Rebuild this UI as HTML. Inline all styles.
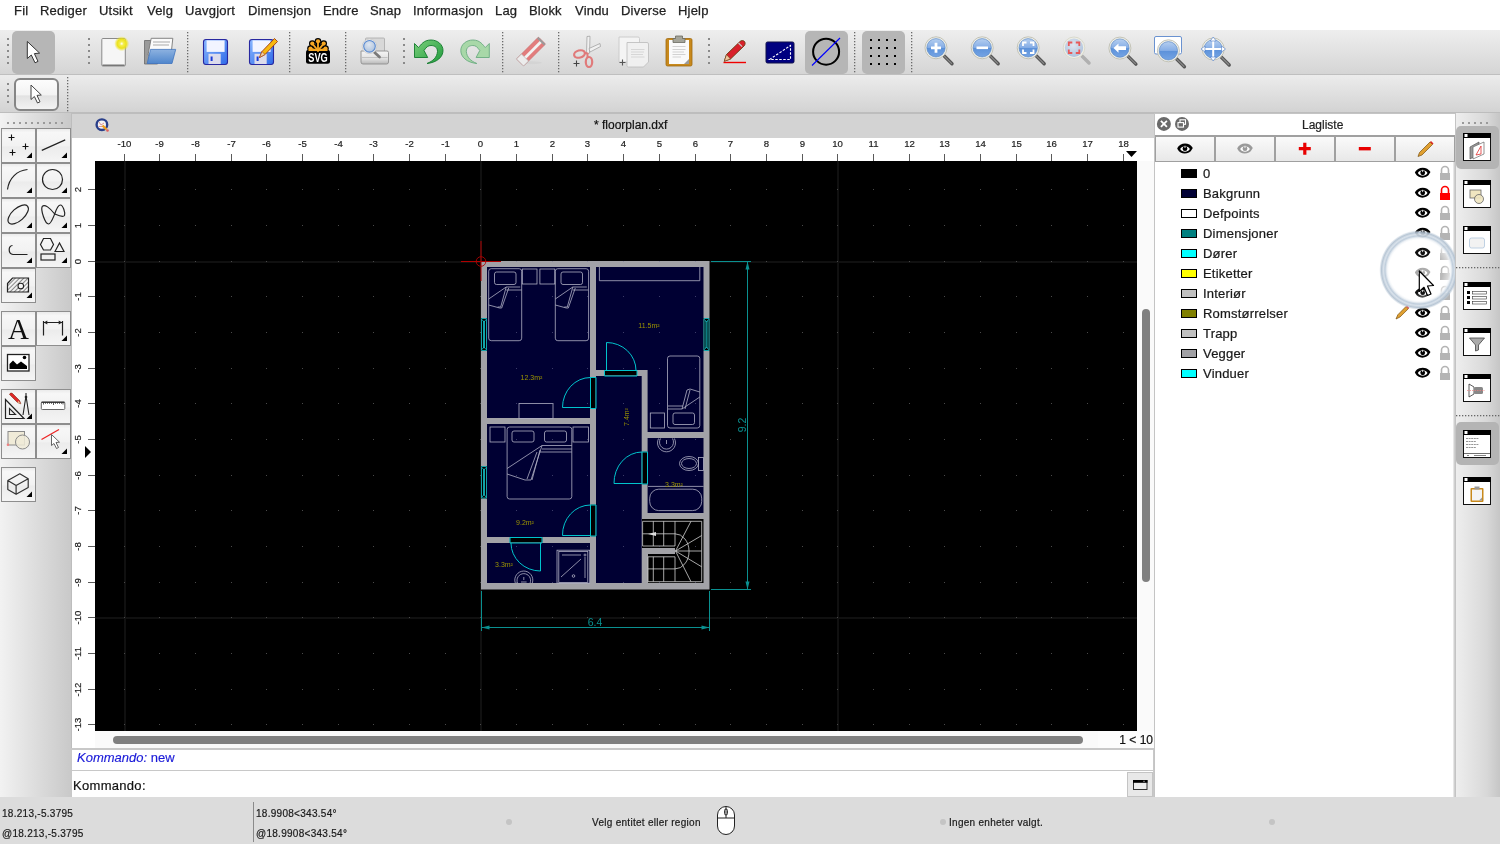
<!DOCTYPE html>
<html><head><meta charset="utf-8">
<style>
*{margin:0;padding:0;box-sizing:border-box}
html,body{width:1500px;height:844px;overflow:hidden;-webkit-font-smoothing:antialiased;background:#fff;font-family:"Liberation Sans",sans-serif;color:#222;position:relative}
.a{position:absolute;will-change:transform}
#menu{left:0;top:0;width:1500px;height:30px;background:#fff}
#menu span{position:absolute;top:3px;font-size:13px;color:#222;line-height:16px;letter-spacing:0.2px;white-space:nowrap;-webkit-text-stroke:0.25px #222}
.tb{left:0;width:1500px;background:linear-gradient(#ececec,#d6d6d6);border-bottom:1px solid #c2c2c2}
#tb1{top:30px;height:45px}
#tb2{top:75px;height:38px}
#left{left:0;top:113px;width:71px;height:685px;background:linear-gradient(90deg,#ededed,#cfcfcf);border-right:1px solid #b9b9b9}
#mdi{left:71px;top:113px;width:1084px;height:636px;background:#c9c9c9}
#mtitle{left:72px;top:114px;width:1082px;height:24px;background:#d4d4d4}
#mtitle .t{position:absolute;left:0;width:1082px;top:5px;text-align:center;font-size:12px;color:#222}
#rulerT{left:72px;top:138px;width:1065px;height:23px;background:#fff}
#rulerL{left:72px;top:161px;width:23px;height:570px;background:#fff}
#canvas{left:95px;top:161px;width:1042px;height:570px;background:#000;overflow:hidden}
#vscroll{left:1137px;top:138px;width:17px;height:593px;background:#fafafa}
#hscroll{left:72px;top:731px;width:1082px;height:17px;background:#fafafa}
#cmd{left:72px;top:749px;width:1082px;height:48px;background:#fff}
#dock{left:1155px;top:113px;width:300px;height:685px;background:#fff;border-left:1px solid #c8c8c8}
#rtb{left:1455px;top:113px;width:45px;height:685px;background:linear-gradient(90deg,#ededed,#cdcdcd)}
#status{left:0;top:797px;width:1500px;height:47px;background:#dcdcdc}
.st{position:absolute;font-size:10px;color:#1a1a1a;line-height:12px;letter-spacing:0.28px;white-space:nowrap;-webkit-text-stroke:0.2px #1a1a1a}
.rt{position:absolute;font-size:10px;color:#333;line-height:12px}
.rl{position:absolute;font-size:10px;color:#333;line-height:12px;transform:rotate(-90deg);transform-origin:center}
</style></head><body>
<div id="menu" class="a">
<span style="left:14px">Fil</span>
<span style="left:40px">Rediger</span>
<span style="left:99px">Utsikt</span>
<span style="left:147px">Velg</span>
<span style="left:185px">Uavgjort</span>
<span style="left:248px">Dimensjon</span>
<span style="left:323px">Endre</span>
<span style="left:370px">Snap</span>
<span style="left:413px">Informasjon</span>
<span style="left:495px">Lag</span>
<span style="left:529px">Blokk</span>
<span style="left:575px">Vindu</span>
<span style="left:621px">Diverse</span>
<span style="left:678px">Hjelp</span>
</div>
<div class="a" style="left:0;top:30px;width:1500px;height:45px;background:linear-gradient(#eeeeee,#d5d5d5);border-bottom:1px solid #bfbfbf"></div>
<div class="a" style="left:0;top:75px;width:1500px;height:38px;background:linear-gradient(#ececec,#d3d3d3);border-bottom:1px solid #bdbdbd"></div>
<svg class="a" style="left:0;top:30px" width="1500" height="83" viewBox="0 30 1500 83">
<defs>
<linearGradient id="mg" x1="0" y1="0" x2="0" y2="1"><stop offset="0" stop-color="#b6cff0"/><stop offset="0.48" stop-color="#86aee6"/><stop offset="0.53" stop-color="#5d92da"/><stop offset="1" stop-color="#74a4e4"/></linearGradient>
<radialGradient id="mgr" cx="0.45" cy="0.35" r="0.7"><stop offset="0" stop-color="#dfe6f0"/><stop offset="1" stop-color="#aac0dc"/></radialGradient>
<linearGradient id="flop" x1="0" y1="0" x2="1" y2="1"><stop offset="0" stop-color="#8ab8ff"/><stop offset="1" stop-color="#2f6ae8"/></linearGradient>
<linearGradient id="fold" x1="0" y1="0" x2="0" y2="1"><stop offset="0" stop-color="#8db2e0"/><stop offset="1" stop-color="#4f86cc"/></linearGradient>
<radialGradient id="star"><stop offset="0" stop-color="#ffffff"/><stop offset="0.25" stop-color="#f4ee50"/><stop offset="0.6" stop-color="#ece21a"/><stop offset="1" stop-color="#ece21a" stop-opacity="0"/></radialGradient>
<linearGradient id="und" x1="0" y1="0" x2="1" y2="1"><stop offset="0" stop-color="#7cd07c"/><stop offset="1" stop-color="#1f9a3c"/></linearGradient>
</defs>
<rect x="7" y="38" width="2" height="2" fill="#8a8a8a"/><rect x="7" y="44" width="2" height="2" fill="#8a8a8a"/><rect x="7" y="50" width="2" height="2" fill="#8a8a8a"/><rect x="7" y="56" width="2" height="2" fill="#8a8a8a"/><rect x="7" y="62" width="2" height="2" fill="#8a8a8a"/>
<rect x="88" y="38" width="2" height="2" fill="#8a8a8a"/><rect x="88" y="44" width="2" height="2" fill="#8a8a8a"/><rect x="88" y="50" width="2" height="2" fill="#8a8a8a"/><rect x="88" y="56" width="2" height="2" fill="#8a8a8a"/><rect x="88" y="62" width="2" height="2" fill="#8a8a8a"/>
<rect x="403" y="38" width="2" height="2" fill="#8a8a8a"/><rect x="403" y="44" width="2" height="2" fill="#8a8a8a"/><rect x="403" y="50" width="2" height="2" fill="#8a8a8a"/><rect x="403" y="56" width="2" height="2" fill="#8a8a8a"/><rect x="403" y="62" width="2" height="2" fill="#8a8a8a"/>
<rect x="708" y="38" width="2" height="2" fill="#8a8a8a"/><rect x="708" y="44" width="2" height="2" fill="#8a8a8a"/><rect x="708" y="50" width="2" height="2" fill="#8a8a8a"/><rect x="708" y="56" width="2" height="2" fill="#8a8a8a"/><rect x="708" y="62" width="2" height="2" fill="#8a8a8a"/>
<rect x="7" y="83" width="2" height="2" fill="#8a8a8a"/><rect x="7" y="89" width="2" height="2" fill="#8a8a8a"/><rect x="7" y="95" width="2" height="2" fill="#8a8a8a"/><rect x="7" y="101" width="2" height="2" fill="#8a8a8a"/>
<rect x="187.0" y="32" width="1.3" height="1.3" fill="#6a6a6a"/><rect x="187.0" y="35" width="1.3" height="1.3" fill="#6a6a6a"/><rect x="187.0" y="38" width="1.3" height="1.3" fill="#6a6a6a"/><rect x="187.0" y="41" width="1.3" height="1.3" fill="#6a6a6a"/><rect x="187.0" y="44" width="1.3" height="1.3" fill="#6a6a6a"/><rect x="187.0" y="47" width="1.3" height="1.3" fill="#6a6a6a"/><rect x="187.0" y="50" width="1.3" height="1.3" fill="#6a6a6a"/><rect x="187.0" y="53" width="1.3" height="1.3" fill="#6a6a6a"/><rect x="187.0" y="56" width="1.3" height="1.3" fill="#6a6a6a"/><rect x="187.0" y="59" width="1.3" height="1.3" fill="#6a6a6a"/><rect x="187.0" y="62" width="1.3" height="1.3" fill="#6a6a6a"/><rect x="187.0" y="65" width="1.3" height="1.3" fill="#6a6a6a"/><rect x="187.0" y="68" width="1.3" height="1.3" fill="#6a6a6a"/><rect x="187.0" y="71" width="1.3" height="1.3" fill="#6a6a6a"/>
<rect x="289.0" y="32" width="1.3" height="1.3" fill="#6a6a6a"/><rect x="289.0" y="35" width="1.3" height="1.3" fill="#6a6a6a"/><rect x="289.0" y="38" width="1.3" height="1.3" fill="#6a6a6a"/><rect x="289.0" y="41" width="1.3" height="1.3" fill="#6a6a6a"/><rect x="289.0" y="44" width="1.3" height="1.3" fill="#6a6a6a"/><rect x="289.0" y="47" width="1.3" height="1.3" fill="#6a6a6a"/><rect x="289.0" y="50" width="1.3" height="1.3" fill="#6a6a6a"/><rect x="289.0" y="53" width="1.3" height="1.3" fill="#6a6a6a"/><rect x="289.0" y="56" width="1.3" height="1.3" fill="#6a6a6a"/><rect x="289.0" y="59" width="1.3" height="1.3" fill="#6a6a6a"/><rect x="289.0" y="62" width="1.3" height="1.3" fill="#6a6a6a"/><rect x="289.0" y="65" width="1.3" height="1.3" fill="#6a6a6a"/><rect x="289.0" y="68" width="1.3" height="1.3" fill="#6a6a6a"/><rect x="289.0" y="71" width="1.3" height="1.3" fill="#6a6a6a"/>
<rect x="345.0" y="32" width="1.3" height="1.3" fill="#6a6a6a"/><rect x="345.0" y="35" width="1.3" height="1.3" fill="#6a6a6a"/><rect x="345.0" y="38" width="1.3" height="1.3" fill="#6a6a6a"/><rect x="345.0" y="41" width="1.3" height="1.3" fill="#6a6a6a"/><rect x="345.0" y="44" width="1.3" height="1.3" fill="#6a6a6a"/><rect x="345.0" y="47" width="1.3" height="1.3" fill="#6a6a6a"/><rect x="345.0" y="50" width="1.3" height="1.3" fill="#6a6a6a"/><rect x="345.0" y="53" width="1.3" height="1.3" fill="#6a6a6a"/><rect x="345.0" y="56" width="1.3" height="1.3" fill="#6a6a6a"/><rect x="345.0" y="59" width="1.3" height="1.3" fill="#6a6a6a"/><rect x="345.0" y="62" width="1.3" height="1.3" fill="#6a6a6a"/><rect x="345.0" y="65" width="1.3" height="1.3" fill="#6a6a6a"/><rect x="345.0" y="68" width="1.3" height="1.3" fill="#6a6a6a"/><rect x="345.0" y="71" width="1.3" height="1.3" fill="#6a6a6a"/>
<rect x="502.0" y="32" width="1.3" height="1.3" fill="#6a6a6a"/><rect x="502.0" y="35" width="1.3" height="1.3" fill="#6a6a6a"/><rect x="502.0" y="38" width="1.3" height="1.3" fill="#6a6a6a"/><rect x="502.0" y="41" width="1.3" height="1.3" fill="#6a6a6a"/><rect x="502.0" y="44" width="1.3" height="1.3" fill="#6a6a6a"/><rect x="502.0" y="47" width="1.3" height="1.3" fill="#6a6a6a"/><rect x="502.0" y="50" width="1.3" height="1.3" fill="#6a6a6a"/><rect x="502.0" y="53" width="1.3" height="1.3" fill="#6a6a6a"/><rect x="502.0" y="56" width="1.3" height="1.3" fill="#6a6a6a"/><rect x="502.0" y="59" width="1.3" height="1.3" fill="#6a6a6a"/><rect x="502.0" y="62" width="1.3" height="1.3" fill="#6a6a6a"/><rect x="502.0" y="65" width="1.3" height="1.3" fill="#6a6a6a"/><rect x="502.0" y="68" width="1.3" height="1.3" fill="#6a6a6a"/><rect x="502.0" y="71" width="1.3" height="1.3" fill="#6a6a6a"/>
<rect x="558.0" y="32" width="1.3" height="1.3" fill="#6a6a6a"/><rect x="558.0" y="35" width="1.3" height="1.3" fill="#6a6a6a"/><rect x="558.0" y="38" width="1.3" height="1.3" fill="#6a6a6a"/><rect x="558.0" y="41" width="1.3" height="1.3" fill="#6a6a6a"/><rect x="558.0" y="44" width="1.3" height="1.3" fill="#6a6a6a"/><rect x="558.0" y="47" width="1.3" height="1.3" fill="#6a6a6a"/><rect x="558.0" y="50" width="1.3" height="1.3" fill="#6a6a6a"/><rect x="558.0" y="53" width="1.3" height="1.3" fill="#6a6a6a"/><rect x="558.0" y="56" width="1.3" height="1.3" fill="#6a6a6a"/><rect x="558.0" y="59" width="1.3" height="1.3" fill="#6a6a6a"/><rect x="558.0" y="62" width="1.3" height="1.3" fill="#6a6a6a"/><rect x="558.0" y="65" width="1.3" height="1.3" fill="#6a6a6a"/><rect x="558.0" y="68" width="1.3" height="1.3" fill="#6a6a6a"/><rect x="558.0" y="71" width="1.3" height="1.3" fill="#6a6a6a"/>
<rect x="854.0" y="32" width="1.3" height="1.3" fill="#6a6a6a"/><rect x="854.0" y="35" width="1.3" height="1.3" fill="#6a6a6a"/><rect x="854.0" y="38" width="1.3" height="1.3" fill="#6a6a6a"/><rect x="854.0" y="41" width="1.3" height="1.3" fill="#6a6a6a"/><rect x="854.0" y="44" width="1.3" height="1.3" fill="#6a6a6a"/><rect x="854.0" y="47" width="1.3" height="1.3" fill="#6a6a6a"/><rect x="854.0" y="50" width="1.3" height="1.3" fill="#6a6a6a"/><rect x="854.0" y="53" width="1.3" height="1.3" fill="#6a6a6a"/><rect x="854.0" y="56" width="1.3" height="1.3" fill="#6a6a6a"/><rect x="854.0" y="59" width="1.3" height="1.3" fill="#6a6a6a"/><rect x="854.0" y="62" width="1.3" height="1.3" fill="#6a6a6a"/><rect x="854.0" y="65" width="1.3" height="1.3" fill="#6a6a6a"/><rect x="854.0" y="68" width="1.3" height="1.3" fill="#6a6a6a"/><rect x="854.0" y="71" width="1.3" height="1.3" fill="#6a6a6a"/>
<rect x="911.0" y="32" width="1.3" height="1.3" fill="#6a6a6a"/><rect x="911.0" y="35" width="1.3" height="1.3" fill="#6a6a6a"/><rect x="911.0" y="38" width="1.3" height="1.3" fill="#6a6a6a"/><rect x="911.0" y="41" width="1.3" height="1.3" fill="#6a6a6a"/><rect x="911.0" y="44" width="1.3" height="1.3" fill="#6a6a6a"/><rect x="911.0" y="47" width="1.3" height="1.3" fill="#6a6a6a"/><rect x="911.0" y="50" width="1.3" height="1.3" fill="#6a6a6a"/><rect x="911.0" y="53" width="1.3" height="1.3" fill="#6a6a6a"/><rect x="911.0" y="56" width="1.3" height="1.3" fill="#6a6a6a"/><rect x="911.0" y="59" width="1.3" height="1.3" fill="#6a6a6a"/><rect x="911.0" y="62" width="1.3" height="1.3" fill="#6a6a6a"/><rect x="911.0" y="65" width="1.3" height="1.3" fill="#6a6a6a"/><rect x="911.0" y="68" width="1.3" height="1.3" fill="#6a6a6a"/><rect x="911.0" y="71" width="1.3" height="1.3" fill="#6a6a6a"/>
<rect x="67.0" y="77" width="1.3" height="1.3" fill="#6a6a6a"/><rect x="67.0" y="80" width="1.3" height="1.3" fill="#6a6a6a"/><rect x="67.0" y="83" width="1.3" height="1.3" fill="#6a6a6a"/><rect x="67.0" y="86" width="1.3" height="1.3" fill="#6a6a6a"/><rect x="67.0" y="89" width="1.3" height="1.3" fill="#6a6a6a"/><rect x="67.0" y="92" width="1.3" height="1.3" fill="#6a6a6a"/><rect x="67.0" y="95" width="1.3" height="1.3" fill="#6a6a6a"/><rect x="67.0" y="98" width="1.3" height="1.3" fill="#6a6a6a"/><rect x="67.0" y="101" width="1.3" height="1.3" fill="#6a6a6a"/><rect x="67.0" y="104" width="1.3" height="1.3" fill="#6a6a6a"/><rect x="67.0" y="107" width="1.3" height="1.3" fill="#6a6a6a"/><rect x="67.0" y="110" width="1.3" height="1.3" fill="#6a6a6a"/>
<rect x="12" y="31" width="43" height="43" rx="5" fill="#b6b6b6"/>
<rect x="805" y="31" width="43" height="43" rx="5" fill="#b6b6b6"/>
<rect x="862" y="31" width="43" height="43" rx="5" fill="#b6b6b6"/>
<path d="M27.3 41.5V58.5L31.3 55L35 62.8L38 61.4L34.4 53.6L39.6 53.1Z" fill="#fff" stroke="#333" stroke-width="1" stroke-linejoin="round"/>
<defs><linearGradient id="b2" x1="0" y1="0" x2="0" y2="1"><stop offset="0" stop-color="#fdfdfd"/><stop offset="0.5" stop-color="#f3f3f3"/><stop offset="0.55" stop-color="#e2e2e2"/><stop offset="1" stop-color="#f4f4f4"/></linearGradient></defs>
<rect x="15" y="79" width="43" height="31" rx="5" fill="url(#b2)" stroke="#858585" stroke-width="2"/>
<path d="M31 85V99.5L34.4 96.5L37.5 103L40 101.8L37 95.4L41.3 95Z" fill="#fff" stroke="#444" stroke-width="1" stroke-linejoin="round"/>
<rect x="101.8" y="38.5" width="23.5" height="27.5" rx="1" fill="#f6f6f6" stroke="#8a8a8a" stroke-width="1"/>
<rect x="102.5" y="64.5" width="22" height="1.5" fill="#777"/>
<circle cx="121.7" cy="43.7" r="7.5" fill="url(#star)"/>
<path d="M144.5 40.5h8l1 1.5h4v22h-13z" fill="#9a9a9a" stroke="#6a6a6a" stroke-width="0.8"/>
<path d="M151.2 38.3H172.8L171 55H148z" fill="#fbfbfb" stroke="#777" stroke-width="0.9"/>
<path d="M153 42h17M153 45h16" stroke="#aaa" stroke-width="1.2"/>
<path d="M150.5 49.4H175.7L172 63.5H147.2Z" fill="url(#fold)" stroke="#3f74bf" stroke-width="0.8"/>
<rect x="203.5" y="39.5" width="24" height="25" rx="2.5" fill="url(#flop)" stroke="#2828a0" stroke-width="1.1"/><rect x="206.6" y="40.4" width="18" height="11.5" fill="#f2f4ff"/><rect x="208.5" y="53.8" width="12.2" height="10.2" fill="#dcdcec"/><rect x="210.6" y="56.5" width="2" height="4.5" fill="#1a3ad8"/>
<rect x="249.5" y="39.5" width="24" height="25" rx="2.5" fill="url(#flop)" stroke="#2828a0" stroke-width="1.1"/><rect x="252.6" y="40.4" width="18" height="11.5" fill="#f2f4ff"/><rect x="254.5" y="53.8" width="12.2" height="10.2" fill="#dcdcec"/><rect x="256.6" y="56.5" width="2" height="4.5" fill="#1a3ad8"/>
<path d="M259.5 57.5L262 51.5L274.5 38.5L277.5 41.5L265 54.5Z" fill="#f7b80f" stroke="#a03a10" stroke-width="0.9"/>
<path d="M259.5 57.5L262 51.5L265 54.5Z" fill="#f0d0a0" stroke="#a03a10" stroke-width="0.6"/>
<path d="M318 50.5L310.5 48.5" stroke="#000" stroke-width="4.2" stroke-linecap="round"/><circle cx="310.5" cy="48.5" r="3.3" fill="#000"/><path d="M318 50.5L312.3 43.6" stroke="#000" stroke-width="4.2" stroke-linecap="round"/><circle cx="312.3" cy="43.6" r="3.3" fill="#000"/><path d="M318 50.5L318 41.3" stroke="#000" stroke-width="4.2" stroke-linecap="round"/><circle cx="318" cy="41.3" r="3.3" fill="#000"/><path d="M318 50.5L323.7 43.6" stroke="#000" stroke-width="4.2" stroke-linecap="round"/><circle cx="323.7" cy="43.6" r="3.3" fill="#000"/><path d="M318 50.5L325.5 48.5" stroke="#000" stroke-width="4.2" stroke-linecap="round"/><circle cx="325.5" cy="48.5" r="3.3" fill="#000"/>
<rect x="306" y="49.7" width="24" height="14" rx="2.5" fill="#000"/>
<path d="M318 50.5L310.5 48.5" stroke="#f7a823" stroke-width="1.8" stroke-linecap="round"/><circle cx="310.5" cy="48.5" r="2.1" fill="#f7a823"/><path d="M318 50.5L312.3 43.6" stroke="#f7a823" stroke-width="1.8" stroke-linecap="round"/><circle cx="312.3" cy="43.6" r="2.1" fill="#f7a823"/><path d="M318 50.5L318 41.3" stroke="#f7a823" stroke-width="1.8" stroke-linecap="round"/><circle cx="318" cy="41.3" r="2.1" fill="#f7a823"/><path d="M318 50.5L323.7 43.6" stroke="#f7a823" stroke-width="1.8" stroke-linecap="round"/><circle cx="323.7" cy="43.6" r="2.1" fill="#f7a823"/><path d="M318 50.5L325.5 48.5" stroke="#f7a823" stroke-width="1.8" stroke-linecap="round"/><circle cx="325.5" cy="48.5" r="2.1" fill="#f7a823"/>
<rect x="308.5" y="49.2" width="19" height="1.8" fill="#f7a823"/>
<text x="0" y="0" font-size="12.5" font-weight="bold" fill="#fff" text-anchor="middle" font-family="Liberation Sans" transform="translate(318 61.8) scale(0.74 0.98)">SVG</text>
<defs><linearGradient id="prn" x1="0" y1="0" x2="0" y2="1"><stop offset="0" stop-color="#f6f6f6"/><stop offset="0.6" stop-color="#e0e0e0"/><stop offset="1" stop-color="#b8b8b8"/></linearGradient></defs>
<rect x="365.5" y="38" width="19" height="14" rx="1" fill="#d8d8d8" stroke="#a8a8a8" stroke-width="0.8"/>
<path d="M361 51h26a1.5 1.5 0 0 1 1.5 1.5v9.5a2 2 0 0 1 -2 2h-23.5a2 2 0 0 1 -2 -2z" fill="url(#prn)" stroke="#8e8e8e" stroke-width="0.9"/>
<path d="M362 57.5h25.5" stroke="#bdbdbd" stroke-width="0.9"/>
<path d="M373 51l6.5 6" stroke="#7a7a7a" stroke-width="2.8" stroke-linecap="round"/>
<circle cx="369.5" cy="46.3" r="7.3" fill="#f2f2f2" stroke="#c8c8c8" stroke-width="0.8"/>
<circle cx="369.5" cy="46.3" r="5.8" fill="url(#mgr)" stroke="#5a8ad0" stroke-width="1.1"/>
<path d="M414.5 43.5L418.5 47.5C421 45 423.5 40 431 40C437.5 40 443 44.5 443 50.5C443 57 437 62.5 427 63.5C433 61 437 57.5 437.5 51.5C437.5 47 434 45.5 431 45.5C428 45.5 426.5 47 424 50.5L427.7 57.5H414.5Z" fill="url(#und)" stroke="#137a2d" stroke-width="0.9" stroke-linejoin="round"/>
<path d="M489.3 43.5L485.3 47.5C482.8 45 480.3 40 472.8 40C466.3 40 460.8 44.5 460.8 50.5C460.8 57 466.8 62.5 476.8 63.5C470.8 61 466.8 57.5 466.3 51.5C466.3 47 469.8 45.5 472.8 45.5C475.8 45.5 477.3 47 479.8 50.5L476.1 57.5H489.3Z" fill="#a8d8a8" stroke="#6aaa80" stroke-width="0.9" stroke-linejoin="round"/>
<ellipse cx="531" cy="62.8" rx="11" ry="1.5" fill="#d4d4d4"/>
<g transform="translate(531 51.5) rotate(-45)"><rect x="-15.5" y="-5" width="31" height="10" rx="1" fill="#e27c7c" stroke="#c86a6a" stroke-width="0.6"/><rect x="-10" y="-1.2" width="25" height="2.8" fill="#f2f2f2"/><rect x="-15.5" y="-5" width="7" height="10" fill="#ececec" stroke="#b0b0b0" stroke-width="0.6"/><rect x="13.5" y="-5" width="2" height="10" fill="#9a9a9a"/></g>
<path d="M587 36.5l3 -0.3 -0.5 17 -3 1z" fill="#f0f0f0" stroke="#999" stroke-width="0.7"/>
<path d="M590 52l10.5 -5.5 -0.5 -3 -11 5z" fill="#f0f0f0" stroke="#999" stroke-width="0.7"/>
<ellipse cx="579.5" cy="54" rx="5.5" ry="3.6" fill="none" stroke="#e07a7a" stroke-width="2.2" transform="rotate(-15 579.5 54)"/>
<ellipse cx="589" cy="62" rx="3.2" ry="5" fill="none" stroke="#e07a7a" stroke-width="2.2"/>
<path d="M584 52.5l3.5 1 0 4" stroke="#e07a7a" stroke-width="2" fill="none"/>
<path d="M573.5 63.5h6M576.5 60.5v6" stroke="#444" stroke-width="1.1"/>
<path d="M619 37h19a1.5 1.5 0 0 1 1.5 1.5v23.5h-20.5z" fill="#f4f4f4" stroke="#c8c8c8" stroke-width="0.9"/>
<path d="M627 42.5h20a1.5 1.5 0 0 1 1.5 1.5v18l-5 5h-15a1.5 1.5 0 0 1 -1.5 -1.5z" fill="#f0f0f0" stroke="#c0c0c0" stroke-width="0.9"/>
<path d="M631 49.5h13.5M631 52h13M631 54.5h12M631 57h13.5" stroke="#cfcfcf" stroke-width="0.8"/>
<path d="M619.5 62.5h6M622.5 59.5v6" stroke="#555" stroke-width="1.1"/>
<rect x="666" y="38.5" width="26" height="27.5" rx="1.5" fill="#c8891c" stroke="#a06a10" stroke-width="0.8"/>
<rect x="669" y="40" width="20" height="24" fill="#fafafa"/>
<path d="M672.5 46.5h13M672.5 49.5h13M672.5 52h11.5M672.5 54.5h13M672.5 57h8.5" stroke="#c8c8c8" stroke-width="0.8"/>
<path d="M684 64l5 -5v5z" fill="#9a9a9a"/>
<path d="M675.5 36h7v2.5h2.5v4h-12v-4h2.5z" fill="#a4a49a" stroke="#6a6a60" stroke-width="0.8"/>
<path d="M723.5 62.5h22.5" stroke="#f00000" stroke-width="1.4"/>
<path d="M724.3 61.2L726.5 54.5L740 41.5C741.5 40 743.5 40.5 744.5 41.5C745.3 42.5 745.5 44.5 744 46L730.5 59Z" fill="#d8202a" stroke="#6a3a10" stroke-width="0.9"/>
<path d="M724.3 61.2L726.5 54.5L730.5 59Z" fill="#f0c8a0" stroke="#6a3a10" stroke-width="0.6"/>
<path d="M738.5 43l3.6 3.6" stroke="#c8c8c8" stroke-width="1.3"/>
<rect x="766" y="42" width="28" height="21" rx="1.5" fill="#000080" stroke="#10104a" stroke-width="1"/>
<path d="M769.5 59.5L790.5 45.5V59.5Z" fill="none" stroke="#fff" stroke-width="1.1" stroke-dasharray="2.5 1.5"/>
<circle cx="826.1" cy="51.7" r="13" fill="none" stroke="#000" stroke-width="2"/>
<path d="M812 65.5L840 38" stroke="#0000ff" stroke-width="1.1"/>
<rect x="870" y="39" width="2" height="2" fill="#000"/>
<rect x="870" y="47" width="2" height="2" fill="#000"/>
<rect x="870" y="55" width="2" height="2" fill="#000"/>
<rect x="870" y="63" width="2" height="2" fill="#000"/>
<rect x="878" y="39" width="2" height="2" fill="#000"/>
<rect x="878" y="47" width="2" height="2" fill="#000"/>
<rect x="878" y="55" width="2" height="2" fill="#000"/>
<rect x="878" y="63" width="2" height="2" fill="#000"/>
<rect x="886" y="39" width="2" height="2" fill="#000"/>
<rect x="886" y="47" width="2" height="2" fill="#000"/>
<rect x="886" y="55" width="2" height="2" fill="#000"/>
<rect x="886" y="63" width="2" height="2" fill="#000"/>
<rect x="894" y="39" width="2" height="2" fill="#000"/>
<rect x="894" y="47" width="2" height="2" fill="#000"/>
<rect x="894" y="55" width="2" height="2" fill="#000"/>
<rect x="894" y="63" width="2" height="2" fill="#000"/>
<path d="M944 55.8L952 63.8" stroke="#555" stroke-width="3.4" stroke-linecap="round"/><path d="M944.5 56.3L951.5 63.3" stroke="#8a8a8a" stroke-width="1.2" stroke-linecap="round"/><circle cx="936" cy="47.8" r="11" fill="#f0f0ea" stroke="#bdbdb0" stroke-width="0.9"/><circle cx="936" cy="47.8" r="9.2" fill="url(#mg)" stroke="#4f7fc0" stroke-width="0.6"/><path d="M931 47.8h10M936 42.8v10" stroke="#fff" stroke-width="2.8"/>
<path d="M990.2 55.8L998.2 63.8" stroke="#555" stroke-width="3.4" stroke-linecap="round"/><path d="M990.7 56.3L997.7 63.3" stroke="#8a8a8a" stroke-width="1.2" stroke-linecap="round"/><circle cx="982.2" cy="47.8" r="11" fill="#f0f0ea" stroke="#bdbdb0" stroke-width="0.9"/><circle cx="982.2" cy="47.8" r="9.2" fill="url(#mg)" stroke="#4f7fc0" stroke-width="0.6"/><path d="M976.5 47.8h11.5" stroke="#fff" stroke-width="2.6"/>
<path d="M1036.2 55.8L1044.2 63.8" stroke="#555" stroke-width="3.4" stroke-linecap="round"/><path d="M1036.7 56.3L1043.7 63.3" stroke="#8a8a8a" stroke-width="1.2" stroke-linecap="round"/><circle cx="1028.2" cy="47.8" r="11" fill="#f0f0ea" stroke="#bdbdb0" stroke-width="0.9"/><circle cx="1028.2" cy="47.8" r="9.2" fill="url(#mg)" stroke="#4f7fc0" stroke-width="0.6"/><path d="M1023 46v-3.5h3.5M1030 42.5h3.5v3.5M1033.5 49.5v3.5h-3.5M1026.5 53h-3.5v-3.5" stroke="#fff" stroke-width="1.8" fill="none"/>
<path d="M1081.5 55.5L1089 63" stroke="#b0b0b0" stroke-width="3.5" stroke-linecap="round"/><circle cx="1074" cy="47.8" r="10.8" fill="#eeeee6" stroke="#d8d8cc" stroke-width="1"/><circle cx="1074" cy="47.8" r="9.2" fill="url(#mgr)"/>
<path d="M1068.8 46v-3.5h3.5M1075.8 42.5h3.5v3.5M1079.3 49.5v3.5h-3.5M1072.3 53h-3.5v-3.5" stroke="#e85a5a" stroke-width="1.8" fill="none"/>
<path d="M1127.9 56.1L1135.9 64.1" stroke="#555" stroke-width="3.4" stroke-linecap="round"/><path d="M1128.4 56.6L1135.4 63.6" stroke="#8a8a8a" stroke-width="1.2" stroke-linecap="round"/><circle cx="1119.9" cy="48.1" r="11" fill="#f0f0ea" stroke="#bdbdb0" stroke-width="0.9"/><circle cx="1119.9" cy="48.1" r="9.2" fill="url(#mg)" stroke="#4f7fc0" stroke-width="0.6"/><path d="M1113.5 48.1L1118.5 43.5V46.3H1126V50H1118.5V52.8Z" fill="#fff"/>
<rect x="1154.5" y="36.5" width="27" height="17.5" rx="1.5" fill="#fff" stroke="#6a92d0" stroke-width="1"/>
<path d="M1176.4 58.8L1184.4 66.8" stroke="#555" stroke-width="3.4" stroke-linecap="round"/><path d="M1176.9 59.3L1183.9 66.3" stroke="#8a8a8a" stroke-width="1.2" stroke-linecap="round"/><circle cx="1168.4" cy="50.8" r="11" fill="#f0f0ea" stroke="#bdbdb0" stroke-width="0.9"/><circle cx="1168.4" cy="50.8" r="9.2" fill="url(#mg)" stroke="#4f7fc0" stroke-width="0.6"/>
<path d="M1221.2 57L1229.2 65" stroke="#555" stroke-width="3.4" stroke-linecap="round"/><path d="M1221.7 57.5L1228.7 64.5" stroke="#8a8a8a" stroke-width="1.2" stroke-linecap="round"/><circle cx="1213.2" cy="49" r="11" fill="#f0f0ea" stroke="#bdbdb0" stroke-width="0.9"/><circle cx="1213.2" cy="49" r="9.2" fill="url(#mg)" stroke="#4f7fc0" stroke-width="0.6"/><path d="M1213.2 38.5V59.5M1202.7 49H1223.7" stroke="#fff" stroke-width="2"/><path d="M1213.2 37l-3 4h6zM1213.2 61l-3 -4h6zM1201 49l4 -3v6zM1225.5 49l-4 -3v6z" fill="#fff" stroke="#4a7ac8" stroke-width="0.6"/>
</svg>
<div class="a" style="left:0;top:113px;width:72px;height:685px;background:linear-gradient(90deg,#f2f2f2,#d9d9d9 60%,#c9c9c9);border-right:1px solid #adadad"></div>
<svg class="a" style="left:0;top:113px" width="72" height="685" viewBox="0 113 72 685">
<defs><linearGradient id="btn" x1="0" y1="0" x2="0" y2="1"><stop offset="0" stop-color="#e9e9e9"/><stop offset="0.12" stop-color="#f7f7f7"/><stop offset="0.5" stop-color="#f2f2f2"/><stop offset="0.55" stop-color="#ececec"/><stop offset="1" stop-color="#f5f5f5"/></linearGradient><linearGradient id="hd" x1="0" y1="0" x2="1" y2="0"><stop offset="0" stop-color="#ececec"/><stop offset="1" stop-color="#cfcfcf"/></linearGradient></defs>
<rect x="7" y="122" width="2" height="2" fill="#9a9a9a"/>
<rect x="13" y="122" width="2" height="2" fill="#9a9a9a"/>
<rect x="19" y="122" width="2" height="2" fill="#9a9a9a"/>
<rect x="25" y="122" width="2" height="2" fill="#9a9a9a"/>
<rect x="31" y="122" width="2" height="2" fill="#9a9a9a"/>
<rect x="37" y="122" width="2" height="2" fill="#9a9a9a"/>
<rect x="43" y="122" width="2" height="2" fill="#9a9a9a"/>
<rect x="49" y="122" width="2" height="2" fill="#9a9a9a"/>
<rect x="55" y="122" width="2" height="2" fill="#9a9a9a"/>
<rect x="61" y="122" width="2" height="2" fill="#9a9a9a"/>
<rect x="1.5" y="128.5" width="34" height="34" fill="url(#btn)" stroke="#8e8e8e" stroke-width="1"/>
<path d="M32 152.5V158H26.5Z" fill="#000"/>
<rect x="36.5" y="128.5" width="34" height="34" fill="url(#btn)" stroke="#8e8e8e" stroke-width="1"/>
<path d="M67 152.5V158H61.5Z" fill="#000"/>
<rect x="1.5" y="163.5" width="34" height="34" fill="url(#btn)" stroke="#8e8e8e" stroke-width="1"/>
<path d="M32 187.5V193H26.5Z" fill="#000"/>
<rect x="36.5" y="163.5" width="34" height="34" fill="url(#btn)" stroke="#8e8e8e" stroke-width="1"/>
<path d="M67 187.5V193H61.5Z" fill="#000"/>
<rect x="1.5" y="198.5" width="34" height="34" fill="url(#btn)" stroke="#8e8e8e" stroke-width="1"/>
<path d="M32 222.5V228H26.5Z" fill="#000"/>
<rect x="36.5" y="198.5" width="34" height="34" fill="url(#btn)" stroke="#8e8e8e" stroke-width="1"/>
<path d="M67 222.5V228H61.5Z" fill="#000"/>
<rect x="1.5" y="233.5" width="34" height="34" fill="url(#btn)" stroke="#8e8e8e" stroke-width="1"/>
<path d="M32 257.5V263H26.5Z" fill="#000"/>
<rect x="36.5" y="233.5" width="34" height="34" fill="url(#btn)" stroke="#8e8e8e" stroke-width="1"/>
<path d="M67 257.5V263H61.5Z" fill="#000"/>
<rect x="1.5" y="268.5" width="34" height="34" fill="url(#btn)" stroke="#8e8e8e" stroke-width="1"/>
<path d="M32 292.5V298H26.5Z" fill="#000"/>
<rect x="1.5" y="311.5" width="34" height="34" fill="url(#btn)" stroke="#8e8e8e" stroke-width="1"/>
<rect x="36.5" y="311.5" width="34" height="34" fill="url(#btn)" stroke="#8e8e8e" stroke-width="1"/>
<path d="M67 335.5V341H61.5Z" fill="#000"/>
<rect x="1.5" y="346.5" width="34" height="34" fill="url(#btn)" stroke="#8e8e8e" stroke-width="1"/>
<rect x="1.5" y="389.5" width="34" height="34" fill="url(#btn)" stroke="#8e8e8e" stroke-width="1"/>
<path d="M32 413.5V419H26.5Z" fill="#000"/>
<rect x="36.5" y="389.5" width="34" height="34" fill="url(#btn)" stroke="#8e8e8e" stroke-width="1"/>
<rect x="1.5" y="424.5" width="34" height="34" fill="url(#btn)" stroke="#8e8e8e" stroke-width="1"/>
<rect x="36.5" y="424.5" width="34" height="34" fill="url(#btn)" stroke="#8e8e8e" stroke-width="1"/>
<path d="M67 448.5V454H61.5Z" fill="#000"/>
<rect x="1.5" y="467.5" width="34" height="34" fill="url(#btn)" stroke="#8e8e8e" stroke-width="1"/>
<path d="M32 491.5V497H26.5Z" fill="#000"/>
<path d="M8.5 137.5h6M11.5 134.5v6M22.5 146.5h6M25.5 143.5v6M9.5 152.5h6M12.5 149.5v6" stroke="#111" stroke-width="1.1"/>
<path d="M41.8 150.4L65.2 139.9" stroke="#222" fill="none" stroke-width="1.2"/>
<path d="M7.5 189.5C9 178 17 170.5 27.5 169.5" stroke="#222" fill="none" stroke-width="1.2"/>
<circle cx="52.5" cy="179.5" r="10" stroke="#222" fill="none" stroke-width="1.2"/>
<ellipse cx="18.2" cy="214.5" rx="12.5" ry="6.2" transform="rotate(-42 18.2 214.5)" stroke="#222" fill="none" stroke-width="1.2"/>
<path d="M54.7 214C50 208 44.5 203.5 42.2 206.5C40.5 210 45 224 48.5 224C51 224 53 218 54.7 214C56 210 58 205 60.5 205C63 205 65.5 213 64.5 215.5C63 218 57 215 54.7 214Z" stroke="#222" fill="none" stroke-width="1.2"/>
<path d="M12.5 245.5C8 246 8 254 13 254.5H27.5" stroke="#222" fill="none" stroke-width="1.2"/>
<path d="M40.5 244.5L43.5 238.5H50.5L53.5 244.5L50.5 250H43.5Z" stroke="#222" fill="none" stroke-width="1.2"/><path d="M55 251.5L59.5 243L64 251.5Z" stroke="#222" fill="none" stroke-width="1.2"/><rect x="41" y="254" width="14" height="6" stroke="#222" fill="none" stroke-width="1.2"/>
<defs><pattern id="hp" width="3" height="3" patternUnits="userSpaceOnUse" patternTransform="rotate(45)"><rect width="3" height="3" fill="#f2f2f2"/><rect width="1" height="3" fill="#888"/></pattern></defs>
<path d="M7.5 283.5L12.5 278H28.5V292H7.5Z" fill="url(#hp)" stroke="#222" stroke-width="1.2"/><circle cx="20.8" cy="286" r="2.8" fill="#f4f4f4" stroke="#222" stroke-width="1.1"/>
<text x="18.5" y="339" font-family="Liberation Serif" font-size="29" text-anchor="middle" fill="#111">A</text>
<path d="M43.5 321V335.5M62.5 321V335.5M44 322.5H62" stroke="#222" fill="none" stroke-width="1.2"/><path d="M43.8 322.5l3.5 -2v4zM62.2 322.5l-3.5 -2v4z" fill="#222"/>
<rect x="7.5" y="354.5" width="21.5" height="16.5" fill="#fff" stroke="#222" stroke-width="1.3"/><path d="M9.5 369V364L13 360.5L17 364.5L21 361.5L27 366V369Z" fill="#000"/><circle cx="24.5" cy="357.5" r="1.8" fill="#000"/>
<path d="M5.5 399.5V418.5H24Z" stroke="#222" fill="none" stroke-width="1.2"/><path d="M9.5 408.5V414.5H15.5Z" fill="none" stroke="#222" stroke-width="1.1"/>
<path d="M9.5 394.5C10 393 11.5 392.8 12.5 393.5L19.5 400.5L20.8 403.8L17.5 402.5L10.5 395.5Z" fill="#e02828" stroke="#7a2a10" stroke-width="0.6"/><path d="M18.3 400.8L20.8 403.8L17.5 402.5Z" fill="#e8c090"/>
<path d="M26 393V396M26 396L23 415M26 396L29 415" stroke="#222" stroke-width="1.1" fill="none"/><circle cx="26" cy="397" r="1.3" fill="#222"/>
<rect x="41.3" y="402" width="23.5" height="7.5" rx="1" fill="#fff" stroke="#666" stroke-width="1"/><path d="M41.5 402.3H64.5" stroke="#333" stroke-width="1.2"/><path d="M43.5 402v2.5M45.5 402v1.8M47.5 402v1.8M49.5 402v1.8M51.5 402v1.8M53.5 402v3M55.5 402v1.8M57.5 402v1.8M59.5 402v1.8M61.5 402v1.8M63 402v2.5" stroke="#333" stroke-width="0.8"/>
<rect x="8" y="431.5" width="16.5" height="13.5" fill="#f0ebd8" stroke="#8a8a8a" stroke-width="1"/><circle cx="22.5" cy="442" r="7" fill="#f0ebd8" fill-opacity="0.85" stroke="#8a8a8a" stroke-width="1"/><circle cx="8" cy="444.8" r="1.3" fill="#f08080"/>
<path d="M41.5 439.5L59 429.5" stroke="#ee2222" stroke-width="1.2"/><path d="M51.5 434.5V445.5L54 443.5L56.5 448.5L58.5 447.5L56 442.5L59.5 442.2Z" fill="#fff" stroke="#555" stroke-width="0.9" stroke-linejoin="round"/>
<path d="M7.8 480.5L19.8 473.8L28.2 478.7L16.1 485.6ZM7.8 480.5V489.5L16.1 494.3V485.6M28.2 478.7V487.6L16.1 494.3" stroke="#333" fill="none" stroke-width="1.2" stroke-linejoin="round"/>
</svg>
<div class="a" style="left:71px;top:113px;width:1085px;height:637px;background:#bdbdbd"></div>
<div class="a" style="left:72px;top:114px;width:1082px;height:24px;background:#d3d3d3"></div>
<div class="a" style="left:594px;top:118px;font-size:12px;line-height:14px;color:#111;white-space:nowrap;-webkit-text-stroke:0.2px #111">* floorplan.dxf</div>
<svg class="a" style="left:92px;top:115px" width="22" height="22" viewBox="92 115 22 22"><circle cx="101.9" cy="124.7" r="5.3" fill="#f4f4f4" stroke="#2a3f8a" stroke-width="2.4"/><path d="M99 122l2 3 3-2M98.5 126.5h4" stroke="#d07070" stroke-width="0.7" fill="none"/><path d="M102.5 125.5L106.5 129.5" stroke="#f0a020" stroke-width="2.4"/><circle cx="107.5" cy="130.5" r="1.3" fill="#e06060"/></svg>
<div class="a" style="left:1137px;top:161px;width:17px;height:570px;background:#fafafa"></div>
<div class="a" style="left:1142px;top:309px;width:8px;height:273px;border-radius:4px;background:#808080"></div>
<div class="a" style="left:72px;top:731px;width:1082px;height:17px;background:#fafafa"></div>
<div class="a" style="left:72px;top:731px;width:23px;height:17px;background:#fff"></div>
<div class="a" style="left:113px;top:736px;width:970px;height:8px;border-radius:4px;background:#808080"></div>
<div class="a" style="left:1098px;top:731px;width:56px;height:17px;background:#fcfcfc"></div>
<div class="a" style="left:1090px;top:733px;width:63px;text-align:right;font-size:12px;line-height:15px;color:#111;white-space:nowrap;-webkit-text-stroke:0.2px #111">1 &lt; 10</div>
<div class="a" style="left:71px;top:748px;width:1085px;height:50px;background:#c8c8c8"></div>
<div class="a" style="left:72px;top:750px;width:1081px;height:20px;background:#fff"></div>
<div class="a" style="left:72px;top:771px;width:1081px;height:26px;background:#fff"></div>
<div class="a" style="left:77px;top:750px;font-size:13px;line-height:16px;color:#1a1ad8;white-space:nowrap;-webkit-text-stroke:0.15px #1a1ad8"><i>Kommando:</i> new</div>
<div class="a" style="left:73px;top:778px;font-size:13px;line-height:16px;color:#111;white-space:nowrap;letter-spacing:0.3px;-webkit-text-stroke:0.2px #111">Kommando:</div>
<div class="a" style="left:1127px;top:772px;width:26px;height:25px;background:#e8e8e8;border:1px solid #c4c4c4"></div>
<svg class="a" style="left:1127px;top:772px" width="26" height="25" viewBox="1127 772 26 25"><rect x="1133.5" y="780.5" width="13.5" height="9" fill="#eee" stroke="#333" stroke-width="1"/><rect x="1133" y="780" width="14.5" height="2.8" fill="#000"/><rect x="1143.5" y="780.8" width="1" height="1" fill="#fff"/></svg>
<div class="a" style="left:1154px;top:113px;width:302px;height:685px;background:#c4c4c4"></div>
<div class="a" style="left:1155px;top:114px;width:300px;height:684px;background:#fff"></div>
<div class="a" style="left:1302px;top:118px;font-size:12px;line-height:14px;color:#222;white-space:nowrap;-webkit-text-stroke:0.2px #222">Lagliste</div>
<svg class="a" style="left:1155px;top:114px" width="300" height="684" viewBox="1155 114 300 684">
<defs><linearGradient id="db" x1="0" y1="0" x2="0" y2="1"><stop offset="0" stop-color="#fafafa"/><stop offset="1" stop-color="#e8e8e8"/></linearGradient></defs>
<circle cx="1163.9" cy="123.9" r="7" fill="#6a6a6a"/><path d="M1160.9 120.9l6 6M1166.9 120.9l-6 6" stroke="#fff" stroke-width="1.8"/>
<circle cx="1182" cy="123.9" r="7" fill="#6a6a6a"/><rect x="1180" y="119.8" width="5.5" height="4.5" fill="none" stroke="#fff" stroke-width="1.1"/><rect x="1178" y="122.6" width="5.5" height="4.5" fill="#6a6a6a" stroke="#fff" stroke-width="1.1"/>
<rect x="1155" y="135" width="300" height="27" fill="#a0a0a0"/>
<rect x="1156" y="137" width="58" height="24" fill="url(#db)"/>
<rect x="1216" y="137" width="58" height="24" fill="url(#db)"/>
<rect x="1276" y="137" width="58" height="24" fill="url(#db)"/>
<rect x="1336" y="137" width="58" height="24" fill="url(#db)"/>
<rect x="1396" y="137" width="58" height="24" fill="url(#db)"/>
<path d="M1177.2 148.2C1180 142.2 1189.5 141.89999999999998 1192.8 147.89999999999998L1192 149.2C1189.5 154.7 1180.5 155.2 1177.7 149.5Z" fill="#000"/><path d="M1180.2 149.0C1182 145.29999999999998 1188 145.29999999999998 1189.8 149.0C1188 152.5 1182 152.5 1180.2 149.0Z" fill="#fff"/><circle cx="1185" cy="148.7" r="2.4" fill="#000"/><rect x="1184.6" y="145.7" width="0.8" height="2.3" fill="#fff"/>
<path d="M1237.2 148.2C1240 142.2 1249.5 141.89999999999998 1252.8 147.89999999999998L1252 149.2C1249.5 154.7 1240.5 155.2 1237.7 149.5Z" fill="#9a9a9a"/><path d="M1240.2 149.0C1242 145.29999999999998 1248 145.29999999999998 1249.8 149.0C1248 152.5 1242 152.5 1240.2 149.0Z" fill="#fff"/><circle cx="1245" cy="148.7" r="2.4" fill="#9a9a9a"/><rect x="1244.6" y="145.7" width="0.8" height="2.3" fill="#fff"/>
<path d="M1298.8 148.7h12M1304.8 142.7v12" stroke="#e80000" stroke-width="3.2"/>
<path d="M1358.8 148.7h12" stroke="#e80000" stroke-width="3.4"/>
<path d="M1418 156.5L1419.5 152.5L1430 142L1432.5 144.5L1422 155Z" fill="#e0a030" stroke="#7a5010" stroke-width="0.7"/><path d="M1430 142l1-1 2.5 2.5-1 1z" fill="#e02020"/>
<rect x="1155" y="162" width="300" height="636" fill="#fff"/>
<rect x="1453.5" y="162" width="1.5" height="636" fill="#d0d0d0"/>
<rect x="1181.5" y="169.5" width="15" height="8" fill="#000000" stroke="#000" stroke-width="1"/>
<text x="1203" y="177.6" font-size="13" letter-spacing="0.2" fill="#1a1a1a" stroke="#1a1a1a" stroke-width="0.22">0</text>
<path d="M1414.9 172.3C1417.7 166.3 1427.2 166.0 1430.5 172.0L1429.7 173.3C1427.2 178.8 1418.2 179.3 1415.4 173.60000000000002Z" fill="#000"/><path d="M1417.9 173.10000000000002C1419.7 169.4 1425.7 169.4 1427.5 173.10000000000002C1425.7 176.60000000000002 1419.7 176.60000000000002 1417.9 173.10000000000002Z" fill="#fff"/><circle cx="1422.7" cy="172.8" r="2.4" fill="#000"/><rect x="1422.3" y="169.8" width="0.8" height="2.3" fill="#fff"/>
<path d="M1441.5 173.5V170A3.5 3.5 0 0 1 1448.5 170V173.5" fill="none" stroke="#b4b4b4" stroke-width="1.6"/><rect x="1440" y="173" width="10" height="7" fill="#b4b4b4"/>
<rect x="1181.5" y="189.5" width="15" height="8" fill="#000035" stroke="#000" stroke-width="1"/>
<text x="1203" y="197.6" font-size="13" letter-spacing="0.2" fill="#1a1a1a" stroke="#1a1a1a" stroke-width="0.22">Bakgrunn</text>
<path d="M1414.9 192.3C1417.7 186.3 1427.2 186.0 1430.5 192.0L1429.7 193.3C1427.2 198.8 1418.2 199.3 1415.4 193.60000000000002Z" fill="#000"/><path d="M1417.9 193.10000000000002C1419.7 189.4 1425.7 189.4 1427.5 193.10000000000002C1425.7 196.60000000000002 1419.7 196.60000000000002 1417.9 193.10000000000002Z" fill="#fff"/><circle cx="1422.7" cy="192.8" r="2.4" fill="#000"/><rect x="1422.3" y="189.8" width="0.8" height="2.3" fill="#fff"/>
<path d="M1441.5 193.5V190A3.5 3.5 0 0 1 1448.5 190V193.5" fill="none" stroke="#ff0000" stroke-width="1.6"/><rect x="1440" y="193" width="10" height="7" fill="#ff0000"/>
<rect x="1181.5" y="209.5" width="15" height="8" fill="#ffffff" stroke="#000" stroke-width="1"/>
<text x="1203" y="217.6" font-size="13" letter-spacing="0.2" fill="#1a1a1a" stroke="#1a1a1a" stroke-width="0.22">Defpoints</text>
<path d="M1414.9 212.3C1417.7 206.3 1427.2 206.0 1430.5 212.0L1429.7 213.3C1427.2 218.8 1418.2 219.3 1415.4 213.60000000000002Z" fill="#000"/><path d="M1417.9 213.10000000000002C1419.7 209.4 1425.7 209.4 1427.5 213.10000000000002C1425.7 216.60000000000002 1419.7 216.60000000000002 1417.9 213.10000000000002Z" fill="#fff"/><circle cx="1422.7" cy="212.8" r="2.4" fill="#000"/><rect x="1422.3" y="209.8" width="0.8" height="2.3" fill="#fff"/>
<path d="M1441.5 213.5V210A3.5 3.5 0 0 1 1448.5 210V213.5" fill="none" stroke="#b4b4b4" stroke-width="1.6"/><rect x="1440" y="213" width="10" height="7" fill="#b4b4b4"/>
<rect x="1181.5" y="229.5" width="15" height="8" fill="#008080" stroke="#000" stroke-width="1"/>
<text x="1203" y="237.6" font-size="13" letter-spacing="0.2" fill="#1a1a1a" stroke="#1a1a1a" stroke-width="0.22">Dimensjoner</text>
<path d="M1414.9 232.3C1417.7 226.3 1427.2 226.0 1430.5 232.0L1429.7 233.3C1427.2 238.8 1418.2 239.3 1415.4 233.60000000000002Z" fill="#000"/><path d="M1417.9 233.10000000000002C1419.7 229.4 1425.7 229.4 1427.5 233.10000000000002C1425.7 236.60000000000002 1419.7 236.60000000000002 1417.9 233.10000000000002Z" fill="#fff"/><circle cx="1422.7" cy="232.8" r="2.4" fill="#000"/><rect x="1422.3" y="229.8" width="0.8" height="2.3" fill="#fff"/>
<path d="M1441.5 233.5V230A3.5 3.5 0 0 1 1448.5 230V233.5" fill="none" stroke="#b4b4b4" stroke-width="1.6"/><rect x="1440" y="233" width="10" height="7" fill="#b4b4b4"/>
<rect x="1181.5" y="249.5" width="15" height="8" fill="#00ffff" stroke="#000" stroke-width="1"/>
<text x="1203" y="257.6" font-size="13" letter-spacing="0.2" fill="#1a1a1a" stroke="#1a1a1a" stroke-width="0.22">Dører</text>
<path d="M1414.9 252.3C1417.7 246.3 1427.2 246.0 1430.5 252.0L1429.7 253.3C1427.2 258.8 1418.2 259.3 1415.4 253.60000000000002Z" fill="#000"/><path d="M1417.9 253.10000000000002C1419.7 249.4 1425.7 249.4 1427.5 253.10000000000002C1425.7 256.6 1419.7 256.6 1417.9 253.10000000000002Z" fill="#fff"/><circle cx="1422.7" cy="252.8" r="2.4" fill="#000"/><rect x="1422.3" y="249.8" width="0.8" height="2.3" fill="#fff"/>
<path d="M1441.5 253.5V250A3.5 3.5 0 0 1 1448.5 250V253.5" fill="none" stroke="#b4b4b4" stroke-width="1.6"/><rect x="1440" y="253" width="10" height="7" fill="#b4b4b4"/>
<rect x="1181.5" y="269.5" width="15" height="8" fill="#ffff00" stroke="#000" stroke-width="1"/>
<text x="1203" y="277.6" font-size="13" letter-spacing="0.2" fill="#1a1a1a" stroke="#1a1a1a" stroke-width="0.22">Etiketter</text>
<path d="M1414.9 272.3C1417.7 266.3 1427.2 266.0 1430.5 272.0L1429.7 273.3C1427.2 278.8 1418.2 279.3 1415.4 273.6Z" fill="#aaaaaa"/><path d="M1417.9 273.1C1419.7 269.40000000000003 1425.7 269.40000000000003 1427.5 273.1C1425.7 276.6 1419.7 276.6 1417.9 273.1Z" fill="#fff"/><circle cx="1422.7" cy="272.8" r="2.4" fill="#aaaaaa"/><rect x="1422.3" y="269.8" width="0.8" height="2.3" fill="#fff"/>
<path d="M1441.5 273.5V270A3.5 3.5 0 0 1 1448.5 270V273.5" fill="none" stroke="#b4b4b4" stroke-width="1.6"/><rect x="1440" y="273" width="10" height="7" fill="#b4b4b4"/>
<rect x="1181.5" y="289.5" width="15" height="8" fill="#c0c0c0" stroke="#000" stroke-width="1"/>
<text x="1203" y="297.6" font-size="13" letter-spacing="0.2" fill="#1a1a1a" stroke="#1a1a1a" stroke-width="0.22">Interiør</text>
<path d="M1414.9 292.3C1417.7 286.3 1427.2 286.0 1430.5 292.0L1429.7 293.3C1427.2 298.8 1418.2 299.3 1415.4 293.6Z" fill="#000"/><path d="M1417.9 293.1C1419.7 289.40000000000003 1425.7 289.40000000000003 1427.5 293.1C1425.7 296.6 1419.7 296.6 1417.9 293.1Z" fill="#fff"/><circle cx="1422.7" cy="292.8" r="2.4" fill="#000"/><rect x="1422.3" y="289.8" width="0.8" height="2.3" fill="#fff"/>
<path d="M1441.5 293.5V290A3.5 3.5 0 0 1 1448.5 290V293.5" fill="none" stroke="#b4b4b4" stroke-width="1.6"/><rect x="1440" y="293" width="10" height="7" fill="#b4b4b4"/>
<rect x="1181.5" y="309.5" width="15" height="8" fill="#808000" stroke="#000" stroke-width="1"/>
<text x="1203" y="317.6" font-size="13" letter-spacing="0.2" fill="#1a1a1a" stroke="#1a1a1a" stroke-width="0.22">Romstørrelser</text>
<path d="M1414.9 312.3C1417.7 306.3 1427.2 306.0 1430.5 312.0L1429.7 313.3C1427.2 318.8 1418.2 319.3 1415.4 313.6Z" fill="#000"/><path d="M1417.9 313.1C1419.7 309.40000000000003 1425.7 309.40000000000003 1427.5 313.1C1425.7 316.6 1419.7 316.6 1417.9 313.1Z" fill="#fff"/><circle cx="1422.7" cy="312.8" r="2.4" fill="#000"/><rect x="1422.3" y="309.8" width="0.8" height="2.3" fill="#fff"/>
<path d="M1441.5 313.5V310A3.5 3.5 0 0 1 1448.5 310V313.5" fill="none" stroke="#b4b4b4" stroke-width="1.6"/><rect x="1440" y="313" width="10" height="7" fill="#b4b4b4"/>
<rect x="1181.5" y="329.5" width="15" height="8" fill="#c0c0c0" stroke="#000" stroke-width="1"/>
<text x="1203" y="337.6" font-size="13" letter-spacing="0.2" fill="#1a1a1a" stroke="#1a1a1a" stroke-width="0.22">Trapp</text>
<path d="M1414.9 332.3C1417.7 326.3 1427.2 326.0 1430.5 332.0L1429.7 333.3C1427.2 338.8 1418.2 339.3 1415.4 333.6Z" fill="#000"/><path d="M1417.9 333.1C1419.7 329.40000000000003 1425.7 329.40000000000003 1427.5 333.1C1425.7 336.6 1419.7 336.6 1417.9 333.1Z" fill="#fff"/><circle cx="1422.7" cy="332.8" r="2.4" fill="#000"/><rect x="1422.3" y="329.8" width="0.8" height="2.3" fill="#fff"/>
<path d="M1441.5 333.5V330A3.5 3.5 0 0 1 1448.5 330V333.5" fill="none" stroke="#b4b4b4" stroke-width="1.6"/><rect x="1440" y="333" width="10" height="7" fill="#b4b4b4"/>
<rect x="1181.5" y="349.5" width="15" height="8" fill="#a0a0a4" stroke="#000" stroke-width="1"/>
<text x="1203" y="357.6" font-size="13" letter-spacing="0.2" fill="#1a1a1a" stroke="#1a1a1a" stroke-width="0.22">Vegger</text>
<path d="M1414.9 352.3C1417.7 346.3 1427.2 346.0 1430.5 352.0L1429.7 353.3C1427.2 358.8 1418.2 359.3 1415.4 353.6Z" fill="#000"/><path d="M1417.9 353.1C1419.7 349.40000000000003 1425.7 349.40000000000003 1427.5 353.1C1425.7 356.6 1419.7 356.6 1417.9 353.1Z" fill="#fff"/><circle cx="1422.7" cy="352.8" r="2.4" fill="#000"/><rect x="1422.3" y="349.8" width="0.8" height="2.3" fill="#fff"/>
<path d="M1441.5 353.5V350A3.5 3.5 0 0 1 1448.5 350V353.5" fill="none" stroke="#b4b4b4" stroke-width="1.6"/><rect x="1440" y="353" width="10" height="7" fill="#b4b4b4"/>
<rect x="1181.5" y="369.5" width="15" height="8" fill="#00ffff" stroke="#000" stroke-width="1"/>
<text x="1203" y="377.6" font-size="13" letter-spacing="0.2" fill="#1a1a1a" stroke="#1a1a1a" stroke-width="0.22">Vinduer</text>
<path d="M1414.9 372.3C1417.7 366.3 1427.2 366.0 1430.5 372.0L1429.7 373.3C1427.2 378.8 1418.2 379.3 1415.4 373.6Z" fill="#000"/><path d="M1417.9 373.1C1419.7 369.40000000000003 1425.7 369.40000000000003 1427.5 373.1C1425.7 376.6 1419.7 376.6 1417.9 373.1Z" fill="#fff"/><circle cx="1422.7" cy="372.8" r="2.4" fill="#000"/><rect x="1422.3" y="369.8" width="0.8" height="2.3" fill="#fff"/>
<path d="M1441.5 373.5V370A3.5 3.5 0 0 1 1448.5 370V373.5" fill="none" stroke="#b4b4b4" stroke-width="1.6"/><rect x="1440" y="373" width="10" height="7" fill="#b4b4b4"/>
<path d="M1396 319L1397.8 314.8L1406 306.5L1408.3 308.8L1400 317Z" fill="#e0a030" stroke="#7a5010" stroke-width="0.7"/><path d="M1406 306.5l1-1 2.3 2.3-1 1z" fill="#e02020"/>
<defs><radialGradient id="ring" cx="0.5" cy="0.5" r="0.5"><stop offset="0" stop-color="#fff" stop-opacity="0"/><stop offset="0.6" stop-color="#fff" stop-opacity="0.08"/><stop offset="0.76" stop-color="#fff" stop-opacity="0.5"/><stop offset="0.81" stop-color="#eef2f6" stop-opacity="0.9"/><stop offset="0.86" stop-color="#bccbda" stop-opacity="0.95"/><stop offset="0.9" stop-color="#d4dee8" stop-opacity="0.9"/><stop offset="0.95" stop-color="#b0c0d0" stop-opacity="0.9"/><stop offset="1" stop-color="#c8d4e0" stop-opacity="0.25"/></radialGradient></defs>
<circle cx="1419" cy="270" r="39.5" fill="url(#ring)"/>
<path d="M1419.3 271V291.5L1424 287.3L1427.5 295.5L1431 294L1427.5 286L1433.5 285.5Z" fill="#fff" stroke="#000" stroke-width="1.2" stroke-linejoin="round"/>
</svg>
<div class="a" style="left:1456px;top:113px;width:44px;height:685px;background:linear-gradient(90deg,#eeeeee,#d8d8d8 70%,#c6c6c6)"></div>
<svg class="a" style="left:1456px;top:113px" width="44" height="685" viewBox="1456 113 44 685">
<rect x="1462" y="122" width="2" height="2" fill="#9a9a9a"/>
<rect x="1468" y="122" width="2" height="2" fill="#9a9a9a"/>
<rect x="1474" y="122" width="2" height="2" fill="#9a9a9a"/>
<rect x="1480" y="122" width="2" height="2" fill="#9a9a9a"/>
<rect x="1486" y="122" width="2" height="2" fill="#9a9a9a"/>
<rect x="1456" y="126" width="43" height="43" rx="5" fill="#b4b4b4"/>
<rect x="1456" y="422" width="43" height="43" rx="5" fill="#b4b4b4"/>
<rect x="1456" y="267" width="1.3" height="1.3" fill="#666"/>
<rect x="1459" y="267" width="1.3" height="1.3" fill="#666"/>
<rect x="1462" y="267" width="1.3" height="1.3" fill="#666"/>
<rect x="1465" y="267" width="1.3" height="1.3" fill="#666"/>
<rect x="1468" y="267" width="1.3" height="1.3" fill="#666"/>
<rect x="1471" y="267" width="1.3" height="1.3" fill="#666"/>
<rect x="1474" y="267" width="1.3" height="1.3" fill="#666"/>
<rect x="1477" y="267" width="1.3" height="1.3" fill="#666"/>
<rect x="1480" y="267" width="1.3" height="1.3" fill="#666"/>
<rect x="1483" y="267" width="1.3" height="1.3" fill="#666"/>
<rect x="1486" y="267" width="1.3" height="1.3" fill="#666"/>
<rect x="1489" y="267" width="1.3" height="1.3" fill="#666"/>
<rect x="1492" y="267" width="1.3" height="1.3" fill="#666"/>
<rect x="1495" y="267" width="1.3" height="1.3" fill="#666"/>
<rect x="1498" y="267" width="1.3" height="1.3" fill="#666"/>
<rect x="1456" y="415" width="1.3" height="1.3" fill="#666"/>
<rect x="1459" y="415" width="1.3" height="1.3" fill="#666"/>
<rect x="1462" y="415" width="1.3" height="1.3" fill="#666"/>
<rect x="1465" y="415" width="1.3" height="1.3" fill="#666"/>
<rect x="1468" y="415" width="1.3" height="1.3" fill="#666"/>
<rect x="1471" y="415" width="1.3" height="1.3" fill="#666"/>
<rect x="1474" y="415" width="1.3" height="1.3" fill="#666"/>
<rect x="1477" y="415" width="1.3" height="1.3" fill="#666"/>
<rect x="1480" y="415" width="1.3" height="1.3" fill="#666"/>
<rect x="1483" y="415" width="1.3" height="1.3" fill="#666"/>
<rect x="1486" y="415" width="1.3" height="1.3" fill="#666"/>
<rect x="1489" y="415" width="1.3" height="1.3" fill="#666"/>
<rect x="1492" y="415" width="1.3" height="1.3" fill="#666"/>
<rect x="1495" y="415" width="1.3" height="1.3" fill="#666"/>
<rect x="1498" y="415" width="1.3" height="1.3" fill="#666"/>
<rect x="1463.5" y="133.5" width="27" height="27" fill="#fff" stroke="#111" stroke-width="1"/><rect x="1463" y="133" width="28" height="5" fill="#000"/><rect x="1464.5" y="134" width="3" height="3" fill="#fff"/><path d="M1470 147L1479 142V154L1470 159Z" fill="#999" stroke="#555" stroke-width="0.7"/><path d="M1473 147L1484 142V154L1473 159Z" fill="#fff" stroke="#666" stroke-width="0.7"/><path d="M1476 155L1481 146V154Z" fill="none" stroke="#e03030" stroke-width="0.8"/>
<rect x="1463.5" y="180.5" width="27" height="27" fill="#fff" stroke="#111" stroke-width="1"/><rect x="1463" y="180" width="28" height="5" fill="#000"/><rect x="1464.5" y="181" width="3" height="3" fill="#fff"/><rect x="1470" y="190" width="11" height="8" fill="#f0e6c0" stroke="#666" stroke-width="0.8"/><circle cx="1479" cy="199" r="4.5" fill="#f0e6c0" fill-opacity="0.9" stroke="#666" stroke-width="0.8"/>
<rect x="1463.5" y="226.5" width="27" height="27" fill="#fff" stroke="#111" stroke-width="1"/><rect x="1463" y="226" width="28" height="5" fill="#000"/><rect x="1464.5" y="227" width="3" height="3" fill="#fff"/><rect x="1469.5" y="238" width="15" height="10" rx="2" fill="#f2f2f2" stroke="#b8cce0" stroke-width="0.9"/>
<rect x="1463.5" y="282.5" width="27" height="27" fill="#fff" stroke="#111" stroke-width="1"/><rect x="1463" y="282" width="28" height="5" fill="#000"/><rect x="1464.5" y="283" width="3" height="3" fill="#fff"/><rect x="1467" y="291" width="3" height="3" fill="#000"/><rect x="1472.5" y="291.5" width="14" height="2.5" fill="#fff" stroke="#333" stroke-width="0.6"/><rect x="1467" y="296" width="3" height="3" fill="#000"/><rect x="1472.5" y="296.5" width="14" height="2.5" fill="#fff" stroke="#333" stroke-width="0.6"/><rect x="1467" y="301" width="3" height="3" fill="#000"/><rect x="1472.5" y="301.5" width="14" height="2.5" fill="#fff" stroke="#333" stroke-width="0.6"/>
<rect x="1463.5" y="328.5" width="27" height="27" fill="#fff" stroke="#111" stroke-width="1"/><rect x="1463" y="328" width="28" height="5" fill="#000"/><rect x="1464.5" y="329" width="3" height="3" fill="#fff"/><path d="M1469.5 338H1484.5L1478.5 345V350L1475.5 351V345Z" fill="#aaa" stroke="#444" stroke-width="0.8"/>
<rect x="1463.5" y="374.5" width="27" height="27" fill="#fff" stroke="#111" stroke-width="1"/><rect x="1463" y="374" width="28" height="5" fill="#000"/><rect x="1464.5" y="375" width="3" height="3" fill="#fff"/><path d="M1469 384L1474 387V394L1469 397Z" fill="#fff" stroke="#333" stroke-width="0.8"/><rect x="1474" y="387" width="9" height="7" rx="1.5" fill="#888"/><path d="M1467 390.5H1485" stroke="#f08080" stroke-width="0.7" stroke-dasharray="1.5 1"/>
<rect x="1463.5" y="430.5" width="27" height="27" fill="#fff" stroke="#111" stroke-width="1"/><rect x="1463" y="430" width="28" height="5" fill="#000"/><rect x="1464.5" y="431" width="3" height="3" fill="#fff"/><path d="M1466 438.5h13" stroke="#8a8a8a" stroke-width="0.9" stroke-dasharray="2 0.6"/><path d="M1466 441.5h10" stroke="#8a8a8a" stroke-width="0.9" stroke-dasharray="2 0.6"/><path d="M1466 444.5h13" stroke="#8a8a8a" stroke-width="0.9" stroke-dasharray="2 0.6"/><path d="M1466 447.5h10" stroke="#8a8a8a" stroke-width="0.9" stroke-dasharray="2 0.6"/><path d="M1464 453.5H1490" stroke="#333" stroke-width="0.7"/><path d="M1467 455.5h2M1474 455.5h12" stroke="#666" stroke-width="0.8"/>
<rect x="1463.5" y="477.5" width="27" height="27" fill="#fff" stroke="#111" stroke-width="1"/><rect x="1463" y="477" width="28" height="5" fill="#000"/><rect x="1464.5" y="478" width="3" height="3" fill="#fff"/><rect x="1470.5" y="488" width="13" height="14" rx="1" fill="#c8891c"/><rect x="1472" y="489.5" width="10" height="11" fill="#f4f4f4"/><rect x="1474.5" y="486.5" width="5" height="3" fill="#999"/><path d="M1479 500.5l3-3v3z" fill="#999"/>
</svg>
<div class="a" style="left:0;top:797px;width:1500px;height:47px;background:#dcdcdc">
<div class="st" style="left:2px;top:11px">18.213,-5.3795</div>
<div class="st" style="left:2px;top:31px">@18.213,-5.3795</div>
<div class="a" style="left:253px;top:5px;width:1px;height:40px;background:#8a8a8a"></div>
<div class="st" style="left:256px;top:11px">18.9908&lt;343.54°</div>
<div class="st" style="left:256px;top:31px">@18.9908&lt;343.54°</div>
<div class="a" style="left:506px;top:22px;width:6px;height:6px;border-radius:3px;background:#c4c4c4"></div>
<div class="st" style="left:592px;top:20px">Velg entitet eller region</div>
<div class="a" style="left:940px;top:22px;width:6px;height:6px;border-radius:3px;background:#c4c4c4"></div>
<div class="st" style="left:949px;top:20px">Ingen enheter valgt.</div>
<div class="a" style="left:1269px;top:22px;width:6px;height:6px;border-radius:3px;background:#c4c4c4"></div>
<svg class="a" style="left:714px;top:5px" width="24" height="36" viewBox="714 802 24 36"><rect x="717.5" y="806.5" width="17" height="28" rx="8.5" fill="#fff" stroke="#222" stroke-width="1"/><path d="M717.5 818H734.5M726 806.5V818" stroke="#222" stroke-width="1"/><rect x="724.5" y="809" width="3" height="6" rx="1.5" fill="none" stroke="#222" stroke-width="0.9"/></svg>
</div>
<div class="a" style="left:72px;top:138px;width:1082px;height:23px;background:#fff"></div>
<div class="a" style="left:72px;top:161px;width:23px;height:570px;background:#fff"></div>
<svg class="a" style="left:72px;top:138px" width="1065" height="593" viewBox="72 138 1065 593">
<rect x="124" y="154" width="1" height="7" fill="#5a5a5a" shape-rendering="crispEdges"/>
<text x="124.5" y="147" font-size="9.6" text-anchor="middle" fill="#222" stroke="#222" stroke-width="0.2">-10</text>
<rect x="159" y="154" width="1" height="7" fill="#5a5a5a" shape-rendering="crispEdges"/>
<text x="159.5" y="147" font-size="9.6" text-anchor="middle" fill="#222" stroke="#222" stroke-width="0.2">-9</text>
<rect x="195" y="154" width="1" height="7" fill="#5a5a5a" shape-rendering="crispEdges"/>
<text x="195.5" y="147" font-size="9.6" text-anchor="middle" fill="#222" stroke="#222" stroke-width="0.2">-8</text>
<rect x="231" y="154" width="1" height="7" fill="#5a5a5a" shape-rendering="crispEdges"/>
<text x="231.5" y="147" font-size="9.6" text-anchor="middle" fill="#222" stroke="#222" stroke-width="0.2">-7</text>
<rect x="266" y="154" width="1" height="7" fill="#5a5a5a" shape-rendering="crispEdges"/>
<text x="266.5" y="147" font-size="9.6" text-anchor="middle" fill="#222" stroke="#222" stroke-width="0.2">-6</text>
<rect x="302" y="154" width="1" height="7" fill="#5a5a5a" shape-rendering="crispEdges"/>
<text x="302.5" y="147" font-size="9.6" text-anchor="middle" fill="#222" stroke="#222" stroke-width="0.2">-5</text>
<rect x="338" y="154" width="1" height="7" fill="#5a5a5a" shape-rendering="crispEdges"/>
<text x="338.5" y="147" font-size="9.6" text-anchor="middle" fill="#222" stroke="#222" stroke-width="0.2">-4</text>
<rect x="373" y="154" width="1" height="7" fill="#5a5a5a" shape-rendering="crispEdges"/>
<text x="373.5" y="147" font-size="9.6" text-anchor="middle" fill="#222" stroke="#222" stroke-width="0.2">-3</text>
<rect x="409" y="154" width="1" height="7" fill="#5a5a5a" shape-rendering="crispEdges"/>
<text x="409.5" y="147" font-size="9.6" text-anchor="middle" fill="#222" stroke="#222" stroke-width="0.2">-2</text>
<rect x="445" y="154" width="1" height="7" fill="#5a5a5a" shape-rendering="crispEdges"/>
<text x="445.5" y="147" font-size="9.6" text-anchor="middle" fill="#222" stroke="#222" stroke-width="0.2">-1</text>
<rect x="480" y="154" width="1" height="7" fill="#5a5a5a" shape-rendering="crispEdges"/>
<text x="480.5" y="147" font-size="9.6" text-anchor="middle" fill="#222" stroke="#222" stroke-width="0.2">0</text>
<rect x="516" y="154" width="1" height="7" fill="#5a5a5a" shape-rendering="crispEdges"/>
<text x="516.5" y="147" font-size="9.6" text-anchor="middle" fill="#222" stroke="#222" stroke-width="0.2">1</text>
<rect x="552" y="154" width="1" height="7" fill="#5a5a5a" shape-rendering="crispEdges"/>
<text x="552.5" y="147" font-size="9.6" text-anchor="middle" fill="#222" stroke="#222" stroke-width="0.2">2</text>
<rect x="587" y="154" width="1" height="7" fill="#5a5a5a" shape-rendering="crispEdges"/>
<text x="587.5" y="147" font-size="9.6" text-anchor="middle" fill="#222" stroke="#222" stroke-width="0.2">3</text>
<rect x="623" y="154" width="1" height="7" fill="#5a5a5a" shape-rendering="crispEdges"/>
<text x="623.5" y="147" font-size="9.6" text-anchor="middle" fill="#222" stroke="#222" stroke-width="0.2">4</text>
<rect x="659" y="154" width="1" height="7" fill="#5a5a5a" shape-rendering="crispEdges"/>
<text x="659.5" y="147" font-size="9.6" text-anchor="middle" fill="#222" stroke="#222" stroke-width="0.2">5</text>
<rect x="695" y="154" width="1" height="7" fill="#5a5a5a" shape-rendering="crispEdges"/>
<text x="695.5" y="147" font-size="9.6" text-anchor="middle" fill="#222" stroke="#222" stroke-width="0.2">6</text>
<rect x="730" y="154" width="1" height="7" fill="#5a5a5a" shape-rendering="crispEdges"/>
<text x="730.5" y="147" font-size="9.6" text-anchor="middle" fill="#222" stroke="#222" stroke-width="0.2">7</text>
<rect x="766" y="154" width="1" height="7" fill="#5a5a5a" shape-rendering="crispEdges"/>
<text x="766.5" y="147" font-size="9.6" text-anchor="middle" fill="#222" stroke="#222" stroke-width="0.2">8</text>
<rect x="802" y="154" width="1" height="7" fill="#5a5a5a" shape-rendering="crispEdges"/>
<text x="802.5" y="147" font-size="9.6" text-anchor="middle" fill="#222" stroke="#222" stroke-width="0.2">9</text>
<rect x="837" y="154" width="1" height="7" fill="#5a5a5a" shape-rendering="crispEdges"/>
<text x="837.5" y="147" font-size="9.6" text-anchor="middle" fill="#222" stroke="#222" stroke-width="0.2">10</text>
<rect x="873" y="154" width="1" height="7" fill="#5a5a5a" shape-rendering="crispEdges"/>
<text x="873.5" y="147" font-size="9.6" text-anchor="middle" fill="#222" stroke="#222" stroke-width="0.2">11</text>
<rect x="909" y="154" width="1" height="7" fill="#5a5a5a" shape-rendering="crispEdges"/>
<text x="909.5" y="147" font-size="9.6" text-anchor="middle" fill="#222" stroke="#222" stroke-width="0.2">12</text>
<rect x="944" y="154" width="1" height="7" fill="#5a5a5a" shape-rendering="crispEdges"/>
<text x="944.5" y="147" font-size="9.6" text-anchor="middle" fill="#222" stroke="#222" stroke-width="0.2">13</text>
<rect x="980" y="154" width="1" height="7" fill="#5a5a5a" shape-rendering="crispEdges"/>
<text x="980.5" y="147" font-size="9.6" text-anchor="middle" fill="#222" stroke="#222" stroke-width="0.2">14</text>
<rect x="1016" y="154" width="1" height="7" fill="#5a5a5a" shape-rendering="crispEdges"/>
<text x="1016.5" y="147" font-size="9.6" text-anchor="middle" fill="#222" stroke="#222" stroke-width="0.2">15</text>
<rect x="1051" y="154" width="1" height="7" fill="#5a5a5a" shape-rendering="crispEdges"/>
<text x="1051.5" y="147" font-size="9.6" text-anchor="middle" fill="#222" stroke="#222" stroke-width="0.2">16</text>
<rect x="1087" y="154" width="1" height="7" fill="#5a5a5a" shape-rendering="crispEdges"/>
<text x="1087.5" y="147" font-size="9.6" text-anchor="middle" fill="#222" stroke="#222" stroke-width="0.2">17</text>
<rect x="1123" y="154" width="1" height="7" fill="#5a5a5a" shape-rendering="crispEdges"/>
<text x="1123.5" y="147" font-size="9.6" text-anchor="middle" fill="#222" stroke="#222" stroke-width="0.2">18</text>
<rect x="88" y="724" width="7" height="1" fill="#5a5a5a" shape-rendering="crispEdges"/>
<text transform="translate(80.7 724.5) rotate(-90)" font-size="9.6" text-anchor="middle" fill="#222" stroke="#222" stroke-width="0.2">-13</text>
<rect x="88" y="689" width="7" height="1" fill="#5a5a5a" shape-rendering="crispEdges"/>
<text transform="translate(80.7 689.5) rotate(-90)" font-size="9.6" text-anchor="middle" fill="#222" stroke="#222" stroke-width="0.2">-12</text>
<rect x="88" y="653" width="7" height="1" fill="#5a5a5a" shape-rendering="crispEdges"/>
<text transform="translate(80.7 653.5) rotate(-90)" font-size="9.6" text-anchor="middle" fill="#222" stroke="#222" stroke-width="0.2">-11</text>
<rect x="88" y="617" width="7" height="1" fill="#5a5a5a" shape-rendering="crispEdges"/>
<text transform="translate(80.7 617.5) rotate(-90)" font-size="9.6" text-anchor="middle" fill="#222" stroke="#222" stroke-width="0.2">-10</text>
<rect x="88" y="582" width="7" height="1" fill="#5a5a5a" shape-rendering="crispEdges"/>
<text transform="translate(80.7 582.5) rotate(-90)" font-size="9.6" text-anchor="middle" fill="#222" stroke="#222" stroke-width="0.2">-9</text>
<rect x="88" y="546" width="7" height="1" fill="#5a5a5a" shape-rendering="crispEdges"/>
<text transform="translate(80.7 546.5) rotate(-90)" font-size="9.6" text-anchor="middle" fill="#222" stroke="#222" stroke-width="0.2">-8</text>
<rect x="88" y="510" width="7" height="1" fill="#5a5a5a" shape-rendering="crispEdges"/>
<text transform="translate(80.7 510.5) rotate(-90)" font-size="9.6" text-anchor="middle" fill="#222" stroke="#222" stroke-width="0.2">-7</text>
<rect x="88" y="475" width="7" height="1" fill="#5a5a5a" shape-rendering="crispEdges"/>
<text transform="translate(80.7 475.5) rotate(-90)" font-size="9.6" text-anchor="middle" fill="#222" stroke="#222" stroke-width="0.2">-6</text>
<rect x="88" y="439" width="7" height="1" fill="#5a5a5a" shape-rendering="crispEdges"/>
<text transform="translate(80.7 439.5) rotate(-90)" font-size="9.6" text-anchor="middle" fill="#222" stroke="#222" stroke-width="0.2">-5</text>
<rect x="88" y="403" width="7" height="1" fill="#5a5a5a" shape-rendering="crispEdges"/>
<text transform="translate(80.7 403.5) rotate(-90)" font-size="9.6" text-anchor="middle" fill="#222" stroke="#222" stroke-width="0.2">-4</text>
<rect x="88" y="368" width="7" height="1" fill="#5a5a5a" shape-rendering="crispEdges"/>
<text transform="translate(80.7 368.5) rotate(-90)" font-size="9.6" text-anchor="middle" fill="#222" stroke="#222" stroke-width="0.2">-3</text>
<rect x="88" y="332" width="7" height="1" fill="#5a5a5a" shape-rendering="crispEdges"/>
<text transform="translate(80.7 332.5) rotate(-90)" font-size="9.6" text-anchor="middle" fill="#222" stroke="#222" stroke-width="0.2">-2</text>
<rect x="88" y="296" width="7" height="1" fill="#5a5a5a" shape-rendering="crispEdges"/>
<text transform="translate(80.7 296.5) rotate(-90)" font-size="9.6" text-anchor="middle" fill="#222" stroke="#222" stroke-width="0.2">-1</text>
<rect x="88" y="261" width="7" height="1" fill="#5a5a5a" shape-rendering="crispEdges"/>
<text transform="translate(80.7 261.5) rotate(-90)" font-size="9.6" text-anchor="middle" fill="#222" stroke="#222" stroke-width="0.2">0</text>
<rect x="88" y="225" width="7" height="1" fill="#5a5a5a" shape-rendering="crispEdges"/>
<text transform="translate(80.7 225.5) rotate(-90)" font-size="9.6" text-anchor="middle" fill="#222" stroke="#222" stroke-width="0.2">1</text>
<rect x="88" y="189" width="7" height="1" fill="#5a5a5a" shape-rendering="crispEdges"/>
<text transform="translate(80.7 189.5) rotate(-90)" font-size="9.6" text-anchor="middle" fill="#222" stroke="#222" stroke-width="0.2">2</text>
<path d="M1126 151h11l-5.5 6z" fill="#000"/>
<path d="M85 446v12l6-6z" fill="#000"/>
</svg>
<svg class="a" style="left:95px;top:161px" width="1042" height="570" viewBox="95 161 1042 570" shape-rendering="crispEdges">
<rect x="95" y="161" width="1042" height="570" fill="#000"/>
<rect x="124" y="161" width="2" height="570" fill="#101010"/>
<rect x="480" y="161" width="2" height="570" fill="#101010"/>
<rect x="837" y="161" width="2" height="570" fill="#101010"/>
<rect x="95" y="261" width="1042" height="2" fill="#101010"/>
<rect x="95" y="617" width="1042" height="2" fill="#101010"/>
<path fill="#4a4a4a" d="M124 724h1v1h-1zM124 689h1v1h-1zM124 653h1v1h-1zM124 617h1v1h-1zM124 582h1v1h-1zM124 546h1v1h-1zM124 510h1v1h-1zM124 475h1v1h-1zM124 439h1v1h-1zM124 403h1v1h-1zM124 368h1v1h-1zM124 332h1v1h-1zM124 296h1v1h-1zM124 261h1v1h-1zM124 225h1v1h-1zM124 189h1v1h-1zM159 724h1v1h-1zM159 689h1v1h-1zM159 653h1v1h-1zM159 617h1v1h-1zM159 582h1v1h-1zM159 546h1v1h-1zM159 510h1v1h-1zM159 475h1v1h-1zM159 439h1v1h-1zM159 403h1v1h-1zM159 368h1v1h-1zM159 332h1v1h-1zM159 296h1v1h-1zM159 261h1v1h-1zM159 225h1v1h-1zM159 189h1v1h-1zM195 724h1v1h-1zM195 689h1v1h-1zM195 653h1v1h-1zM195 617h1v1h-1zM195 582h1v1h-1zM195 546h1v1h-1zM195 510h1v1h-1zM195 475h1v1h-1zM195 439h1v1h-1zM195 403h1v1h-1zM195 368h1v1h-1zM195 332h1v1h-1zM195 296h1v1h-1zM195 261h1v1h-1zM195 225h1v1h-1zM195 189h1v1h-1zM231 724h1v1h-1zM231 689h1v1h-1zM231 653h1v1h-1zM231 617h1v1h-1zM231 582h1v1h-1zM231 546h1v1h-1zM231 510h1v1h-1zM231 475h1v1h-1zM231 439h1v1h-1zM231 403h1v1h-1zM231 368h1v1h-1zM231 332h1v1h-1zM231 296h1v1h-1zM231 261h1v1h-1zM231 225h1v1h-1zM231 189h1v1h-1zM266 724h1v1h-1zM266 689h1v1h-1zM266 653h1v1h-1zM266 617h1v1h-1zM266 582h1v1h-1zM266 546h1v1h-1zM266 510h1v1h-1zM266 475h1v1h-1zM266 439h1v1h-1zM266 403h1v1h-1zM266 368h1v1h-1zM266 332h1v1h-1zM266 296h1v1h-1zM266 261h1v1h-1zM266 225h1v1h-1zM266 189h1v1h-1zM302 724h1v1h-1zM302 689h1v1h-1zM302 653h1v1h-1zM302 617h1v1h-1zM302 582h1v1h-1zM302 546h1v1h-1zM302 510h1v1h-1zM302 475h1v1h-1zM302 439h1v1h-1zM302 403h1v1h-1zM302 368h1v1h-1zM302 332h1v1h-1zM302 296h1v1h-1zM302 261h1v1h-1zM302 225h1v1h-1zM302 189h1v1h-1zM338 724h1v1h-1zM338 689h1v1h-1zM338 653h1v1h-1zM338 617h1v1h-1zM338 582h1v1h-1zM338 546h1v1h-1zM338 510h1v1h-1zM338 475h1v1h-1zM338 439h1v1h-1zM338 403h1v1h-1zM338 368h1v1h-1zM338 332h1v1h-1zM338 296h1v1h-1zM338 261h1v1h-1zM338 225h1v1h-1zM338 189h1v1h-1zM373 724h1v1h-1zM373 689h1v1h-1zM373 653h1v1h-1zM373 617h1v1h-1zM373 582h1v1h-1zM373 546h1v1h-1zM373 510h1v1h-1zM373 475h1v1h-1zM373 439h1v1h-1zM373 403h1v1h-1zM373 368h1v1h-1zM373 332h1v1h-1zM373 296h1v1h-1zM373 261h1v1h-1zM373 225h1v1h-1zM373 189h1v1h-1zM409 724h1v1h-1zM409 689h1v1h-1zM409 653h1v1h-1zM409 617h1v1h-1zM409 582h1v1h-1zM409 546h1v1h-1zM409 510h1v1h-1zM409 475h1v1h-1zM409 439h1v1h-1zM409 403h1v1h-1zM409 368h1v1h-1zM409 332h1v1h-1zM409 296h1v1h-1zM409 261h1v1h-1zM409 225h1v1h-1zM409 189h1v1h-1zM445 724h1v1h-1zM445 689h1v1h-1zM445 653h1v1h-1zM445 617h1v1h-1zM445 582h1v1h-1zM445 546h1v1h-1zM445 510h1v1h-1zM445 475h1v1h-1zM445 439h1v1h-1zM445 403h1v1h-1zM445 368h1v1h-1zM445 332h1v1h-1zM445 296h1v1h-1zM445 261h1v1h-1zM445 225h1v1h-1zM445 189h1v1h-1zM480 724h1v1h-1zM480 689h1v1h-1zM480 653h1v1h-1zM480 617h1v1h-1zM480 582h1v1h-1zM480 546h1v1h-1zM480 510h1v1h-1zM480 475h1v1h-1zM480 439h1v1h-1zM480 403h1v1h-1zM480 368h1v1h-1zM480 332h1v1h-1zM480 296h1v1h-1zM480 261h1v1h-1zM480 225h1v1h-1zM480 189h1v1h-1zM516 724h1v1h-1zM516 689h1v1h-1zM516 653h1v1h-1zM516 617h1v1h-1zM516 582h1v1h-1zM516 546h1v1h-1zM516 510h1v1h-1zM516 475h1v1h-1zM516 439h1v1h-1zM516 403h1v1h-1zM516 368h1v1h-1zM516 332h1v1h-1zM516 296h1v1h-1zM516 261h1v1h-1zM516 225h1v1h-1zM516 189h1v1h-1zM552 724h1v1h-1zM552 689h1v1h-1zM552 653h1v1h-1zM552 617h1v1h-1zM552 582h1v1h-1zM552 546h1v1h-1zM552 510h1v1h-1zM552 475h1v1h-1zM552 439h1v1h-1zM552 403h1v1h-1zM552 368h1v1h-1zM552 332h1v1h-1zM552 296h1v1h-1zM552 261h1v1h-1zM552 225h1v1h-1zM552 189h1v1h-1zM587 724h1v1h-1zM587 689h1v1h-1zM587 653h1v1h-1zM587 617h1v1h-1zM587 582h1v1h-1zM587 546h1v1h-1zM587 510h1v1h-1zM587 475h1v1h-1zM587 439h1v1h-1zM587 403h1v1h-1zM587 368h1v1h-1zM587 332h1v1h-1zM587 296h1v1h-1zM587 261h1v1h-1zM587 225h1v1h-1zM587 189h1v1h-1zM623 724h1v1h-1zM623 689h1v1h-1zM623 653h1v1h-1zM623 617h1v1h-1zM623 582h1v1h-1zM623 546h1v1h-1zM623 510h1v1h-1zM623 475h1v1h-1zM623 439h1v1h-1zM623 403h1v1h-1zM623 368h1v1h-1zM623 332h1v1h-1zM623 296h1v1h-1zM623 261h1v1h-1zM623 225h1v1h-1zM623 189h1v1h-1zM659 724h1v1h-1zM659 689h1v1h-1zM659 653h1v1h-1zM659 617h1v1h-1zM659 582h1v1h-1zM659 546h1v1h-1zM659 510h1v1h-1zM659 475h1v1h-1zM659 439h1v1h-1zM659 403h1v1h-1zM659 368h1v1h-1zM659 332h1v1h-1zM659 296h1v1h-1zM659 261h1v1h-1zM659 225h1v1h-1zM659 189h1v1h-1zM695 724h1v1h-1zM695 689h1v1h-1zM695 653h1v1h-1zM695 617h1v1h-1zM695 582h1v1h-1zM695 546h1v1h-1zM695 510h1v1h-1zM695 475h1v1h-1zM695 439h1v1h-1zM695 403h1v1h-1zM695 368h1v1h-1zM695 332h1v1h-1zM695 296h1v1h-1zM695 261h1v1h-1zM695 225h1v1h-1zM695 189h1v1h-1zM730 724h1v1h-1zM730 689h1v1h-1zM730 653h1v1h-1zM730 617h1v1h-1zM730 582h1v1h-1zM730 546h1v1h-1zM730 510h1v1h-1zM730 475h1v1h-1zM730 439h1v1h-1zM730 403h1v1h-1zM730 368h1v1h-1zM730 332h1v1h-1zM730 296h1v1h-1zM730 261h1v1h-1zM730 225h1v1h-1zM730 189h1v1h-1zM766 724h1v1h-1zM766 689h1v1h-1zM766 653h1v1h-1zM766 617h1v1h-1zM766 582h1v1h-1zM766 546h1v1h-1zM766 510h1v1h-1zM766 475h1v1h-1zM766 439h1v1h-1zM766 403h1v1h-1zM766 368h1v1h-1zM766 332h1v1h-1zM766 296h1v1h-1zM766 261h1v1h-1zM766 225h1v1h-1zM766 189h1v1h-1zM802 724h1v1h-1zM802 689h1v1h-1zM802 653h1v1h-1zM802 617h1v1h-1zM802 582h1v1h-1zM802 546h1v1h-1zM802 510h1v1h-1zM802 475h1v1h-1zM802 439h1v1h-1zM802 403h1v1h-1zM802 368h1v1h-1zM802 332h1v1h-1zM802 296h1v1h-1zM802 261h1v1h-1zM802 225h1v1h-1zM802 189h1v1h-1zM837 724h1v1h-1zM837 689h1v1h-1zM837 653h1v1h-1zM837 617h1v1h-1zM837 582h1v1h-1zM837 546h1v1h-1zM837 510h1v1h-1zM837 475h1v1h-1zM837 439h1v1h-1zM837 403h1v1h-1zM837 368h1v1h-1zM837 332h1v1h-1zM837 296h1v1h-1zM837 261h1v1h-1zM837 225h1v1h-1zM837 189h1v1h-1zM873 724h1v1h-1zM873 689h1v1h-1zM873 653h1v1h-1zM873 617h1v1h-1zM873 582h1v1h-1zM873 546h1v1h-1zM873 510h1v1h-1zM873 475h1v1h-1zM873 439h1v1h-1zM873 403h1v1h-1zM873 368h1v1h-1zM873 332h1v1h-1zM873 296h1v1h-1zM873 261h1v1h-1zM873 225h1v1h-1zM873 189h1v1h-1zM909 724h1v1h-1zM909 689h1v1h-1zM909 653h1v1h-1zM909 617h1v1h-1zM909 582h1v1h-1zM909 546h1v1h-1zM909 510h1v1h-1zM909 475h1v1h-1zM909 439h1v1h-1zM909 403h1v1h-1zM909 368h1v1h-1zM909 332h1v1h-1zM909 296h1v1h-1zM909 261h1v1h-1zM909 225h1v1h-1zM909 189h1v1h-1zM944 724h1v1h-1zM944 689h1v1h-1zM944 653h1v1h-1zM944 617h1v1h-1zM944 582h1v1h-1zM944 546h1v1h-1zM944 510h1v1h-1zM944 475h1v1h-1zM944 439h1v1h-1zM944 403h1v1h-1zM944 368h1v1h-1zM944 332h1v1h-1zM944 296h1v1h-1zM944 261h1v1h-1zM944 225h1v1h-1zM944 189h1v1h-1zM980 724h1v1h-1zM980 689h1v1h-1zM980 653h1v1h-1zM980 617h1v1h-1zM980 582h1v1h-1zM980 546h1v1h-1zM980 510h1v1h-1zM980 475h1v1h-1zM980 439h1v1h-1zM980 403h1v1h-1zM980 368h1v1h-1zM980 332h1v1h-1zM980 296h1v1h-1zM980 261h1v1h-1zM980 225h1v1h-1zM980 189h1v1h-1zM1016 724h1v1h-1zM1016 689h1v1h-1zM1016 653h1v1h-1zM1016 617h1v1h-1zM1016 582h1v1h-1zM1016 546h1v1h-1zM1016 510h1v1h-1zM1016 475h1v1h-1zM1016 439h1v1h-1zM1016 403h1v1h-1zM1016 368h1v1h-1zM1016 332h1v1h-1zM1016 296h1v1h-1zM1016 261h1v1h-1zM1016 225h1v1h-1zM1016 189h1v1h-1zM1051 724h1v1h-1zM1051 689h1v1h-1zM1051 653h1v1h-1zM1051 617h1v1h-1zM1051 582h1v1h-1zM1051 546h1v1h-1zM1051 510h1v1h-1zM1051 475h1v1h-1zM1051 439h1v1h-1zM1051 403h1v1h-1zM1051 368h1v1h-1zM1051 332h1v1h-1zM1051 296h1v1h-1zM1051 261h1v1h-1zM1051 225h1v1h-1zM1051 189h1v1h-1zM1087 724h1v1h-1zM1087 689h1v1h-1zM1087 653h1v1h-1zM1087 617h1v1h-1zM1087 582h1v1h-1zM1087 546h1v1h-1zM1087 510h1v1h-1zM1087 475h1v1h-1zM1087 439h1v1h-1zM1087 403h1v1h-1zM1087 368h1v1h-1zM1087 332h1v1h-1zM1087 296h1v1h-1zM1087 261h1v1h-1zM1087 225h1v1h-1zM1087 189h1v1h-1zM1123 724h1v1h-1zM1123 689h1v1h-1zM1123 653h1v1h-1zM1123 617h1v1h-1zM1123 582h1v1h-1zM1123 546h1v1h-1zM1123 510h1v1h-1zM1123 475h1v1h-1zM1123 439h1v1h-1zM1123 403h1v1h-1zM1123 368h1v1h-1zM1123 332h1v1h-1zM1123 296h1v1h-1zM1123 261h1v1h-1zM1123 225h1v1h-1zM1123 189h1v1h-1z"/>
</svg>
<svg class="a" style="left:95px;top:161px" width="1042" height="570" viewBox="95 161 1042 570">
<rect x="481" y="261" width="228.5" height="328.5" fill="#a2a2a7"/>
<rect x="487" y="267" width="103" height="151" fill="#000033"/>
<rect x="487" y="424" width="103" height="113" fill="#000033"/>
<rect x="487" y="543" width="103" height="40" fill="#000033"/>
<rect x="596" y="376" width="45.7" height="207" fill="#000033"/>
<rect x="647.6" y="438" width="55.9" height="75" fill="#000033"/>
<path d="M596 267H703.5V432H647.6V370H596Z" fill="#000033"/>
<path d="M642 519H703.5V583H648V554H675V548H642Z" fill="#000"/>
<g fill="none" stroke="#b0b0c4" stroke-width="0.8"><rect x="488.7" y="268.7" width="33" height="72" rx="2.5"/><rect x="494.5" y="272" width="21.5" height="12.5" rx="2"/><rect x="555.3" y="268.7" width="33.3" height="72" rx="2.5"/><rect x="561" y="272" width="21.5" height="12.5" rx="2"/><rect x="522.3" y="269" width="14.7" height="15" rx="0"/><rect x="539.9" y="269" width="14.9" height="15" rx="0"/><polyline points="488.7,299 506.2,287 520.2,287"/><polyline points="506.2,287 500.7,307 497.7,307"/><polyline points="488.7,305 499.7,308 501.7,308 508.7,288"/><polyline points="506.2,290 521.7,290"/><polyline points="555.3,299 572.8,287 586.8,287"/><polyline points="572.8,287 567.3,307 564.3,307"/><polyline points="555.3,305 566.3,308 568.3,308 575.3,288"/><polyline points="572.8,290 588.3,290"/><rect x="519" y="403.4" width="34" height="15" rx="0"/><polyline points="599.4,267 599.4,280.7 699.8,280.7 699.8,267"/><rect x="667.5" y="356" width="32.3" height="72" rx="2.5"/><rect x="673" y="413" width="21.5" height="11.5" rx="2"/><rect x="650.3" y="413" width="14.3" height="15" rx="0"/><polyline points="699.8,397 682,409 668,409"/><polyline points="682,409 687,390 690,389 699.8,392"/><polyline points="685,409 690,390"/><polyline points="668,406 683,406"/><rect x="507.1" y="427" width="64.7" height="72" rx="2.5"/><rect x="512" y="431" width="22" height="11" rx="2"/><rect x="544.5" y="431" width="22" height="11" rx="2"/><rect x="490" y="427" width="15" height="15" rx="0"/><rect x="573" y="427" width="15.6" height="15" rx="0"/><polyline points="507.1,468.5 542,445.5 571.8,445.5"/><polyline points="542,445.5 531,480 525,480 507.1,474"/><polyline points="537,452 527,479"/><polyline points="540,450 532,480"/><polyline points="542,449 571.8,449"/><polyline points="540,452 571.8,452"/><rect x="557" y="550.2" width="32.7" height="33"/><rect x="558.8" y="551.5" width="29" height="31"/><polyline points="561,577 581,559"/><polyline points="562,555 581,555"/><polyline points="585,557 585,578"/><circle cx="585" cy="555" r="1"/><circle cx="573.5" cy="576" r="1.3"/><path d="M515.3 583A9 9 0 1 1 532.3 583"/><path d="M517.5 583A6.8 6.8 0 1 1 530.1 583"/><path d="M523.8 577v3M521 582h5.6"/><path d="M658.6 438.5A9 9 0 1 0 674.4 438.5"/><path d="M660.5 438.5A7 7 0 1 0 672.5 438.5"/><path d="M666.5 440v4"/><ellipse cx="689" cy="463.5" rx="9.5" ry="7"/><ellipse cx="689" cy="463.5" rx="7.5" ry="5"/><rect x="698.5" y="457.5" width="5" height="13"/><line x1="648" y1="486.4" x2="703.5" y2="486.4"/><rect x="649.7" y="489.2" width="52" height="21.4" rx="9"/></g>
<path d="M642.6 521.3L701.7 521.3M701.7 521.3L701.7 581.7M648 581.7L701.7 581.7M642.6 521.3L642.6 546M642.6 546L675 546M648 556.8L675 556.8M648 556.8L648 581.7M653.3 521.3L653.3 546M653.3 556.8L653.3 581.7M663.7 521.3L663.7 546M663.7 556.8L663.7 581.7M675 521.3L675 546M675 556.8L675 581.7M642.6 533.8L675 533.8M648 568.9L675 568.9M675 533.8A14 17.5 0 0 1 675 568.9M675.5 551L691 521.3M675.5 551L701.7 535.5M675.5 551L701.7 551M675.5 551L701.7 566.8M675.5 551L691 581.7" fill="none" stroke="#d0d0d0" stroke-width="0.8"/>
<path d="M648 534l8-2v4z" fill="#ddd"/>
<rect x="590.7" y="377" width="5" height="31.399999999999977" fill="#000"/><rect x="642.2" y="451.7" width="5" height="32.5" fill="#000"/><rect x="590.7" y="504.6" width="5" height="31.699999999999932" fill="#000"/><rect x="604.4" y="370.5" width="32.60000000000002" height="5" fill="#000"/><rect x="509.8" y="537.5" width="32.599999999999966" height="5" fill="#000"/>
<rect x="481" y="318" width="6" height="33" fill="#000"/><rect x="703.5" y="318" width="6" height="33" fill="#000"/><rect x="481" y="466" width="6" height="32.5" fill="#000"/>
<path d="M481.5 318.5h5v32h-5zM483.5 321V348M484.5 321V348M482 319.5L484 322L486 319.5M482 349.5L484 347L486 349.5M704.0 318.5h5v32h-5zM706.0 321V348M707.0 321V348M704.5 319.5L706.5 322L708.5 319.5M704.5 349.5L706.5 347L708.5 349.5M481.5 466.5h5v31.5h-5zM483.5 469V495.5M484.5 469V495.5M482 467.5L484 470L486 467.5M482 497.0L484 494.5L486 497.0" fill="none" stroke="#14b4bc" stroke-width="0.9"/>
<path d="M590.5 377.5h5.5v31h-5.5zM562.5 407.5H590.5M562.5 407.5A28 30 0 0 1 590.5 377.5M642 452h5.5v32h-5.5zM614 483.5H642M614 483.5A28 31 0 0 1 642 452M590.5 505h5.5v31h-5.5zM562.5 535.5H590.5M562.5 535.5A28 30 0 0 1 590.5 505M604.5 370.5h32.5v5.5h-32.5zM606.5 342.5V370.5M606.5 342.5A29.5 28 0 0 1 636 370.5M510 537.5h32v5.5h-32zM540.5 543V571M511 543A29.5 28 0 0 0 540.5 571" fill="none" stroke="#00c4cc" stroke-width="1"/>
<text x="531.5" y="380" font-size="7" fill="#9c9400" text-anchor="middle">12.3m²</text>
<text x="649" y="327.8" font-size="7" fill="#9c9400" text-anchor="middle">11.5m²</text>
<text transform="translate(628.5 417) rotate(-90)" font-size="7" fill="#9c9400" text-anchor="middle">7.4m²</text>
<text x="525" y="524.5" font-size="7" fill="#9c9400" text-anchor="middle">9.2m²</text>
<text x="504" y="566.8" font-size="7" fill="#9c9400" text-anchor="middle">3.3m²</text>
<text x="674" y="486.5" font-size="7" fill="#9c9400" text-anchor="middle">3.3m²</text>
<path d="M711 261.5H751M711 589.5H751M747.5 262V589M481.5 591V631M709.5 591V631M482 627.5H709" fill="none" stroke="#0a9090" stroke-width="1"/>
<path d="M747.5 261.5l-2 8h4zM747.5 589.5l-2 -8h4zM481.5 627.5l8 -2v4zM709.5 627.5l-8 -2v4z" fill="#0a9090"/>
<text x="595" y="625.5" font-size="10.5" fill="#0a9090" text-anchor="middle">6.4</text>
<text transform="translate(746 425) rotate(-90)" font-size="10.5" fill="#0a9090" text-anchor="middle">9.2</text>
<path shape-rendering="crispEdges" fill="#7878a0" fill-opacity="0.5" d="M516 582h1v1h-1zM516 546h1v1h-1zM516 510h1v1h-1zM516 475h1v1h-1zM516 439h1v1h-1zM516 403h1v1h-1zM516 368h1v1h-1zM516 332h1v1h-1zM516 296h1v1h-1zM516 261h1v1h-1zM552 582h1v1h-1zM552 546h1v1h-1zM552 510h1v1h-1zM552 475h1v1h-1zM552 439h1v1h-1zM552 403h1v1h-1zM552 368h1v1h-1zM552 332h1v1h-1zM552 296h1v1h-1zM552 261h1v1h-1zM587 582h1v1h-1zM587 546h1v1h-1zM587 510h1v1h-1zM587 475h1v1h-1zM587 439h1v1h-1zM587 403h1v1h-1zM587 368h1v1h-1zM587 332h1v1h-1zM587 296h1v1h-1zM587 261h1v1h-1zM623 582h1v1h-1zM623 546h1v1h-1zM623 510h1v1h-1zM623 475h1v1h-1zM623 439h1v1h-1zM623 403h1v1h-1zM623 368h1v1h-1zM623 332h1v1h-1zM623 296h1v1h-1zM623 261h1v1h-1zM659 582h1v1h-1zM659 546h1v1h-1zM659 510h1v1h-1zM659 475h1v1h-1zM659 439h1v1h-1zM659 403h1v1h-1zM659 368h1v1h-1zM659 332h1v1h-1zM659 296h1v1h-1zM659 261h1v1h-1zM695 582h1v1h-1zM695 546h1v1h-1zM695 510h1v1h-1zM695 475h1v1h-1zM695 439h1v1h-1zM695 403h1v1h-1zM695 368h1v1h-1zM695 332h1v1h-1zM695 296h1v1h-1zM695 261h1v1h-1z"/>
<path d="M461 261.5H501M481 241V281" stroke="#b00000" stroke-width="1" fill="none"/>
<circle cx="481" cy="261.5" r="4.8" stroke="#b00000" stroke-width="0.9" fill="none"/>
</svg>
</body></html>
